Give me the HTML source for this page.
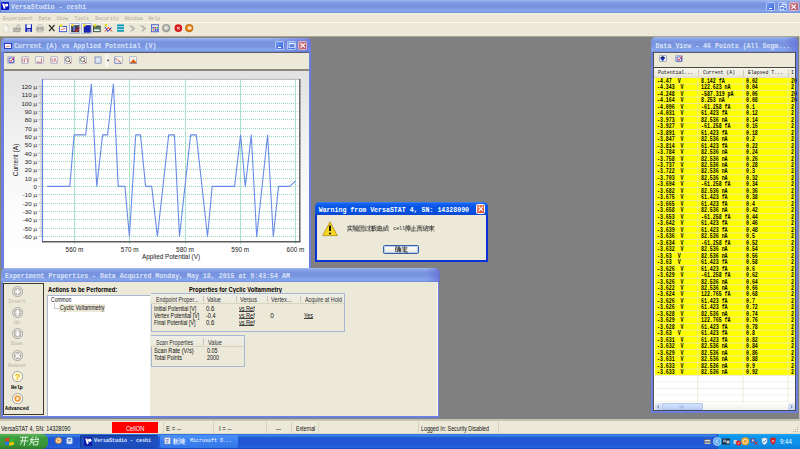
<!DOCTYPE html><html><head><meta charset="utf-8"><style>
html,body{margin:0;padding:0}body{width:800px;height:449px;overflow:hidden;position:relative;background:#808080;font-family:"Liberation Sans",sans-serif}
div{box-sizing:border-box}svg{display:block}
</style></head><body>
<div style="position:absolute;left:0.00px;top:0.00px;width:800.00px;height:12.50px;background:linear-gradient(#a6bdf0 0%,#8ca7e9 10%,#7893df 32%,#7a96e0 62%,#86a6ec 80%,#80a0e8 92%,#7088da 100%)"></div>
<div style="position:absolute;left:0.00px;top:0.00px;width:0.90px;height:12.50px;background:#6c80d8"></div>
<div style="position:absolute;left:1.25px;top:1.90px;width:7.75px;height:8.10px;background:#0812c4;border-radius:1px"></div>
<svg style="position:absolute;left:1.25px;top:1.90px;" width="8" height="8" viewBox="0 0 8 8"><path d="M1.1 1.6 L2.9 7 L4.5 6.3 L3.3 1.6 Z" fill="#fff"/><circle cx="5.6" cy="3.1" r="1.7" fill="#fff"/></svg>
<div style="position:absolute;left:11.00px;top:4.60px;white-space:pre;font:bold 6.6px/6.6px 'Liberation Mono', monospace;color:#dce4f8;">VersaStudio - ceshi</div>
<div style="position:absolute;left:765.75px;top:1.75px;width:9.50px;height:9.50px;background:linear-gradient(135deg,#719af0,#3d69de);border:0.6px solid #b5c8f3;border-radius:1.2px"></div>
<div style="position:absolute;left:768.60px;top:7.64px;width:3.04px;height:1.52px;background:#fff"></div>
<div style="position:absolute;left:777.50px;top:1.75px;width:9.25px;height:9.50px;background:linear-gradient(135deg,#719af0,#3d69de);border:0.6px solid #b5c8f3;border-radius:1.2px"></div>
<svg style="position:absolute;left:777.50px;top:1.75px;" width="9.25" height="9.5" viewBox="0 0 9.25 9.5"><path d="M4 3.6 L4 2.1 L7.6 2.1 L7.6 5.6 L6.2 5.6" fill="none" stroke="#fff" stroke-width="0.65"/><rect x="4" y="1.8" width="3.6" height="0.9" fill="#fff"/><rect x="2.1" y="4.3" width="3.8" height="3.4" fill="none" stroke="#fff" stroke-width="0.65"/><rect x="2.1" y="4.0" width="3.8" height="1.0" fill="#fff"/></svg>
<div style="position:absolute;left:789.00px;top:1.75px;width:9.50px;height:9.50px;background:linear-gradient(135deg,#cf8793,#b0596a);border:0.6px solid #dcb4c0;border-radius:1.2px"></div>
<svg style="position:absolute;left:789.00px;top:1.75px;" width="9.5" height="9.5" viewBox="0 0 9.5 9.5"><path d="M2.57 2.57 L6.93 6.93 M6.93 2.57 L2.57 6.93" stroke="#fff" stroke-width="1.1"/></svg>
<div style="position:absolute;left:0.00px;top:12.50px;width:800.00px;height:9.90px;background:#ece9d8"></div>
<div style="position:absolute;left:0.00px;top:12.50px;width:800.00px;height:0.70px;background:#f4f1e2"></div>
<div style="position:absolute;left:0.00px;top:21.90px;width:800.00px;height:0.70px;background:#faf8f0"></div>
<div style="position:absolute;left:3.00px;top:15.60px;white-space:pre;font:normal 5.6px/5.6px 'Liberation Mono', monospace;color:#aca899;transform:scaleX(0.8839);transform-origin:0 0;">Experiment  Data  View  Tools  Security  Window  Help</div>
<div style="position:absolute;left:0.00px;top:22.60px;width:800.00px;height:13.10px;background:#ece9d8"></div>
<div style="position:absolute;left:0.00px;top:35.50px;width:800.00px;height:1.00px;background:#a9a592"></div>
<svg style="position:absolute;left:2.50px;top:24.40px;" width="6.25" height="8.200000000000003" viewBox="0 0 6.25 8.200000000000003"><path d="M0.4 0.4 L4 0.4 L5.8 2.2 L5.8 7.9 L0.4 7.9Z" fill="#f2f1ea" stroke="#d4d2c6" stroke-width="0.5"/><path d="M4 0.4 L4 2.2 L5.8 2.2" fill="#dcdad0" stroke="#c8c6ba" stroke-width="0.4"/></svg>
<svg style="position:absolute;left:12.80px;top:24.40px;" width="8.2" height="8.200000000000003" viewBox="0 0 8.2 8.200000000000003"><path d="M0.5 3.5 L0.5 7.8 L7 7.8 L7.8 4 L2 4 Z" fill="#a8a7a0"/><path d="M3 3.5 L4.5 0.5 L7 1.2 L6.5 4.5Z" fill="#dcdbd4" stroke="#8c8b84" stroke-width="0.4"/><path d="M0.5 3.5 L2.8 3.5 L2 7.8 L0.5 7.8Z" fill="#c4c3bc"/><path d="M1 4.5 L7.6 4.5 L6.8 7.8 L0.5 7.8Z" fill="#bab9b2" stroke="#8c8b84" stroke-width="0.4"/></svg>
<svg style="position:absolute;left:24.60px;top:24.40px;" width="7.5" height="8.200000000000003" viewBox="0 0 7.5 8.200000000000003"><rect x="0.3" y="0.3" width="6.90" height="7.60" fill="#1420b8"/><rect x="1.6" y="0.3" width="4.30" height="3.6" fill="#f4f6fc"/><rect x="2.4" y="5.2" width="2.90" height="2.70" fill="#e8ecf8"/><rect x="3.4" y="5.8" width="1" height="1.6" fill="#1420b8"/></svg>
<svg style="position:absolute;left:36.00px;top:24.40px;" width="8.200000000000003" height="8.200000000000003" viewBox="0 0 8.200000000000003 8.200000000000003"><path d="M2.2 0.5 L5.8 0.5 L6.2 3.5 L1.8 3.5Z" fill="#e6e5de" stroke="#a4a39c" stroke-width="0.4"/><rect x="0.4" y="3.2" width="7.4" height="3.4" rx="0.6" fill="#b4b3ac" stroke="#8c8b84" stroke-width="0.4"/><rect x="1.6" y="5.8" width="5" height="2.2" fill="#d6d5ce" stroke="#9c9b94" stroke-width="0.4"/></svg>
<svg style="position:absolute;left:47.50px;top:24.40px;" width="7.5" height="8.200000000000003" viewBox="0 0 7.5 8.200000000000003"><path d="M1 1 L6.50 7.20 M6.50 1 L1 7.20" stroke="#303030" stroke-width="1.3"/></svg>
<svg style="position:absolute;left:58.75px;top:24.40px;" width="8.150000000000006" height="8.200000000000003" viewBox="0 0 8.150000000000006 8.200000000000003"><rect x="0.4" y="2.5" width="7.35" height="5.20" fill="#fff" stroke="#3447c8" stroke-width="0.9"/><path d="M2 6 L4 5 L6.5 4.5" stroke="#d03030" stroke-width="0.7" fill="none"/><circle cx="2" cy="1.8" r="1.5" fill="#e8d820"/></svg>
<div style="position:absolute;left:69.00px;top:23.40px;width:11.00px;height:10.40px;background:#f6f6f2;border:0.7px solid #a8b8d8;border-radius:1px"></div>
<svg style="position:absolute;left:70.60px;top:24.40px;" width="9" height="8.200000000000003" viewBox="0 0 9 8.200000000000003"><rect x="0.3" y="1.5" width="7.5" height="6.5" fill="#404050" stroke="#2a2a40" stroke-width="0.5"/><rect x="2" y="2" width="2" height="5" fill="#6070d0"/><path d="M4 6 L5.5 7.5 L8.5 3.5" stroke="#e02020" stroke-width="1.1" fill="none"/><circle cx="1.6" cy="1.2" r="1.2" fill="#e8d820"/></svg>
<div style="position:absolute;left:81.00px;top:23.40px;width:10.50px;height:10.40px;background:#f6f6f2;border:0.7px solid #a8b8d8;border-radius:1px"></div>
<svg style="position:absolute;left:82.50px;top:24.40px;" width="8" height="8.200000000000003" viewBox="0 0 8 8.200000000000003"><rect x="1" y="1.5" width="6.5" height="6.8" fill="#1624b8" stroke="#101060" stroke-width="0.5"/><circle cx="1.4" cy="1.4" r="1.3" fill="#e8d820"/></svg>
<svg style="position:absolute;left:93.00px;top:24.40px;" width="7.599999999999994" height="8.200000000000003" viewBox="0 0 7.599999999999994 8.200000000000003"><rect x="0.4" y="2" width="6.80" height="5.80" fill="#2a8a6a" stroke="#303030" stroke-width="0.7"/><rect x="1" y="5.5" width="5.60" height="1.6" fill="#fff"/><path d="M1 5 L3 3.5 L5 4.5 L7 3" stroke="#e04040" stroke-width="0.7" fill="none"/><circle cx="2" cy="1.4" r="1.3" fill="#e8d820"/></svg>
<svg style="position:absolute;left:104.40px;top:24.40px;" width="8.599999999999994" height="8.200000000000003" viewBox="0 0 8.599999999999994 8.200000000000003"><path d="M1 3 L4 7.5 L7.5 3.5" stroke="#2030d0" stroke-width="1" fill="none"/><path d="M1 7.5 L4.5 3.5 L8 7.5" stroke="#e02020" stroke-width="1" fill="none"/><circle cx="2" cy="1.4" r="1.3" fill="#e8d820"/></svg>
<svg style="position:absolute;left:116.90px;top:24.40px;" width="7.099999999999994" height="8.200000000000003" viewBox="0 0 7.099999999999994 8.200000000000003"><rect x="0" y="0.4" width="7.10" height="7.40" fill="#1a9ab8"/><rect x="0" y="2.4" width="7.10" height="0.8" fill="#d0f0f8"/><rect x="0" y="5" width="7.10" height="0.8" fill="#d0f0f8"/></svg>
<svg style="position:absolute;left:127.50px;top:24.40px;" width="8.099999999999994" height="8.200000000000003" viewBox="0 0 8.099999999999994 8.200000000000003"><path d="M0.5 1.5 L4 1.5 L7.5 4.5 L4 7.5 L2 7.5 L4.5 4.5 Z" fill="#b8b7b0"/></svg>
<svg style="position:absolute;left:138.75px;top:24.40px;" width="8.150000000000006" height="8.200000000000003" viewBox="0 0 8.150000000000006 8.200000000000003"><path d="M0.5 1.5 L4 1.5 L7.5 4.5 L4 7.5 L2 7.5 L4.5 4.5 Z" fill="#b8b7b0"/></svg>
<svg style="position:absolute;left:150.60px;top:24.40px;" width="8.150000000000006" height="8.200000000000003" viewBox="0 0 8.150000000000006 8.200000000000003"><rect x="0.3" y="0.8" width="7.55" height="7.00" fill="#e8ecf8" stroke="#2840c0" stroke-width="0.8"/><rect x="1.5" y="3" width="1.5" height="1.5" fill="#2040c0"/><rect x="3.5" y="3" width="1.5" height="1.5" fill="#d03030"/><rect x="5.5" y="3" width="1.5" height="1.5" fill="#20a040"/><rect x="1.5" y="5.2" width="1.5" height="1.5" fill="#e0a020"/><rect x="3.5" y="5.2" width="1.5" height="1.5" fill="#2040c0"/><rect x="5.5" y="5.2" width="1.5" height="1.5" fill="#2040c0"/></svg>
<svg style="position:absolute;left:162.25px;top:24.40px;" width="8.349999999999994" height="8.200000000000003" viewBox="0 0 8.349999999999994 8.200000000000003"><circle cx="4.17" cy="4.10" r="3.90" fill="#a8a8a4" stroke="#888884" stroke-width="0.5"/><circle cx="4.17" cy="3.80" r="2.50" fill="#c8c8c4"/><path d="M3.4 2.6 L6 4.1 L3.4 5.6Z" fill="#f4f4f4"/></svg>
<svg style="position:absolute;left:173.50px;top:24.40px;" width="8.75" height="8.200000000000003" viewBox="0 0 8.75 8.200000000000003"><circle cx="4.38" cy="4.10" r="3.90" fill="#d81818"/><path d="M3 3 L5.8 5.4 M5.8 3 L3 5.4" stroke="#fff" stroke-width="0.9"/></svg>
<svg style="position:absolute;left:185.20px;top:24.40px;" width="8.400000000000006" height="8.200000000000003" viewBox="0 0 8.400000000000006 8.200000000000003"><circle cx="4.20" cy="4.10" r="3.90" fill="#d87a10" stroke="#b06008" stroke-width="0.5"/><circle cx="4.20" cy="3.70" r="2.30" fill="#f0a040"/><path d="M3.2 2.4 L5.8 4.1 L3.2 5.8Z" fill="#fff"/><rect x="5.6" y="2.6" width="0.8" height="3" fill="#fff"/></svg>
<div style="position:absolute;left:0.00px;top:36.40px;width:1.30px;height:382.90px;background:#8a8874"></div>
<div style="position:absolute;left:798.60px;top:36.40px;width:1.40px;height:382.90px;background:#c8c6bc"></div>
<div style="position:absolute;left:1.00px;top:37.50px;width:310.00px;height:230.50px;background:#6b7fe0;border-radius:5px 5px 0 0"></div>
<div style="position:absolute;left:1.00px;top:37.50px;width:310.00px;height:14.50px;background:linear-gradient(#a6bdf0 0%,#8ca7e9 10%,#7893df 32%,#7a96e0 62%,#86a6ec 80%,#80a0e8 92%,#7088da 100%);border-radius:5px 5px 0 0"></div>
<div style="position:absolute;left:4.00px;top:43.30px;width:8.20px;height:5.70px;background:#fff;border:0.9px solid #2c3fd0"></div>
<svg style="position:absolute;left:4.00px;top:43.30px;" width="8.2" height="5.7" viewBox="0 0 8.2 5.7"><path d="M1.5 4 L3.5 3.2 L5 3.5 L6.8 1.8" stroke="#d04040" stroke-width="0.7" fill="none"/></svg>
<div style="position:absolute;left:14.00px;top:43.60px;white-space:pre;font:bold 6.6px/6.6px 'Liberation Mono', monospace;color:#dce4f8;">Current (A) vs Applied Potential (V)</div>
<div style="position:absolute;left:271.00px;top:37.50px;width:40.00px;height:14.50px;background:linear-gradient(90deg,rgba(96,104,214,0) 0%,rgba(96,104,214,0.45) 80%,rgba(96,104,214,0.6) 100%);border-radius:0 5px 0 0"></div>
<div style="position:absolute;left:275.00px;top:41.00px;width:9.06px;height:9.00px;background:linear-gradient(135deg,#719af0,#3d69de);border:0.6px solid #b5c8f3;border-radius:1.2px"></div>
<div style="position:absolute;left:277.72px;top:46.58px;width:2.90px;height:1.44px;background:#fff"></div>
<div style="position:absolute;left:286.60px;top:41.00px;width:9.30px;height:9.00px;background:linear-gradient(135deg,#719af0,#3d69de);border:0.6px solid #b5c8f3;border-radius:1.2px"></div>
<svg style="position:absolute;left:286.60px;top:41.00px;" width="9.299999999999955" height="9" viewBox="0 0 9.299999999999955 9"><rect x="2.05" y="2.16" width="5.21" height="4.50" fill="none" stroke="#f4f6ff" stroke-width="0.7"/><rect x="2.05" y="1.98" width="5.21" height="1.2" fill="#f4f6ff"/></svg>
<div style="position:absolute;left:297.90px;top:41.00px;width:9.60px;height:9.00px;background:linear-gradient(135deg,#cf8793,#b0596a);border:0.6px solid #dcb4c0;border-radius:1.2px"></div>
<svg style="position:absolute;left:297.90px;top:41.00px;" width="9.600000000000023" height="9" viewBox="0 0 9.600000000000023 9"><path d="M2.59 2.43 L7.01 6.57 M7.01 2.43 L2.59 6.57" stroke="#fff" stroke-width="1.1"/></svg>
<div style="position:absolute;left:4.00px;top:52.00px;width:304.75px;height:216.00px;background:#ece9d8"></div>
<div style="position:absolute;left:4.00px;top:69.30px;width:304.75px;height:1.30px;background:#8a8878"></div>
<div style="position:absolute;left:4.00px;top:52.00px;width:304.75px;height:0.80px;background:#5a5a6a"></div>
<div style="position:absolute;left:4.00px;top:70.60px;width:304.75px;height:197.40px;background:linear-gradient(#e2e2e2 0%,#f0f0f0 30%,#fcfcfc 70%,#ffffff 100%)"></div>
<div style="position:absolute;left:6.65px;top:56.10px;width:8.25px;height:8.30px;background:#f2f1ea;border:0.6px solid #b8bccc;border-radius:1px"></div>
<svg style="position:absolute;left:6.65px;top:56.10px;" width="8.25" height="8.3" viewBox="0 0 8.25 8.3"><rect x="2" y="2" width="4.5" height="4.5" fill="#fff" stroke="#3040c0" stroke-width="0.8"/><path d="M2.8 4 L4 5.6 L6.8 1.5" stroke="#e02020" stroke-width="0.9" fill="none"/></svg>
<div style="position:absolute;left:21.00px;top:56.10px;width:7.90px;height:8.30px;background:#f2f1ea;border:0.6px solid #b8bccc;border-radius:1px"></div>
<svg style="position:absolute;left:21.00px;top:56.10px;" width="7.899999999999999" height="8.3" viewBox="0 0 7.899999999999999 8.3"><path d="M1.8 6.5 L1.8 2.2 M3.5 6.5 L3.5 3 L5 2 L6.5 3 L6.5 6.5" stroke="#c04060" stroke-width="0.6" fill="none"/></svg>
<div style="position:absolute;left:35.00px;top:56.10px;width:8.80px;height:8.30px;background:#f2f1ea;border:0.6px solid #b8bccc;border-radius:1px"></div>
<svg style="position:absolute;left:35.00px;top:56.10px;" width="8.799999999999997" height="8.3" viewBox="0 0 8.799999999999997 8.3"><path d="M1.8 6.5 L6.8 6.5 M6.5 2 L6.5 6.5 M3 5 L3 6.5" stroke="#c04060" stroke-width="0.6" fill="none"/></svg>
<div style="position:absolute;left:49.90px;top:56.10px;width:8.20px;height:8.30px;background:#f2f1ea;border:0.6px solid #b8bccc;border-radius:1px"></div>
<svg style="position:absolute;left:49.90px;top:56.10px;" width="8.200000000000003" height="8.3" viewBox="0 0 8.200000000000003 8.3"><path d="M2 6.5 L2 2 M3.6 6.5 L4.8 2.2 L6.5 6.5" stroke="#c04060" stroke-width="0.6" fill="none"/></svg>
<div style="position:absolute;left:63.90px;top:56.10px;width:7.90px;height:8.30px;background:#f2f1ea;border:0.6px solid #b8bccc;border-radius:1px"></div>
<svg style="position:absolute;left:63.90px;top:56.10px;" width="7.899999999999999" height="8.3" viewBox="0 0 7.899999999999999 8.3"><circle cx="3.6" cy="3.6" r="2.1" fill="none" stroke="#404040" stroke-width="0.7"/><path d="M5 5 L7 7" stroke="#d05020" stroke-width="1"/></svg>
<div style="position:absolute;left:78.80px;top:56.10px;width:7.90px;height:8.30px;background:#f2f1ea;border:0.6px solid #b8bccc;border-radius:1px"></div>
<svg style="position:absolute;left:78.80px;top:56.10px;" width="7.900000000000006" height="8.3" viewBox="0 0 7.900000000000006 8.3"><circle cx="3.6" cy="3.6" r="2.1" fill="none" stroke="#404040" stroke-width="0.7"/><path d="M5 5 L7 7" stroke="#d05020" stroke-width="1"/></svg>
<div style="position:absolute;left:93.70px;top:56.10px;width:7.90px;height:8.30px;background:#f2f1ea;border:0.6px solid #b8bccc;border-radius:1px"></div>
<svg style="position:absolute;left:93.70px;top:56.10px;" width="7.8999999999999915" height="8.3" viewBox="0 0 7.8999999999999915 8.3"><rect x="1.5" y="1.5" width="5" height="5.5" fill="#dde4f4" stroke="#8090b8" stroke-width="0.5"/></svg>
<div style="position:absolute;left:105.00px;top:54.00px;width:6.20px;height:13.00px;background:linear-gradient(90deg,#f8f8f4,#e8e6dc);border-radius:1px"></div>
<svg style="position:absolute;left:105.00px;top:54.00px;" width="6.2" height="13" viewBox="0 0 6.2 13"><path d="M1.8 5.8 L4.4 5.8 L3.1 7.4Z" fill="#202020"/></svg>
<div style="position:absolute;left:113.80px;top:56.10px;width:8.80px;height:8.30px;background:#f2f1ea;border:0.6px solid #b8bccc;border-radius:1px"></div>
<svg style="position:absolute;left:113.80px;top:56.10px;" width="8.799999999999997" height="8.3" viewBox="0 0 8.799999999999997 8.3"><path d="M1.5 2 L4 4.5 L7 6.5" stroke="#d03030" stroke-width="0.8" fill="none"/><path d="M1 1 L1 7.3 L7.5 7.3" stroke="#4060c0" stroke-width="0.5" fill="none"/></svg>
<div style="position:absolute;left:128.70px;top:56.10px;width:8.80px;height:8.30px;background:#f2f1ea;border:0.6px solid #b8bccc;border-radius:1px"></div>
<svg style="position:absolute;left:128.70px;top:56.10px;" width="8.800000000000011" height="8.3" viewBox="0 0 8.800000000000011 8.3"><path d="M1 7 L4.4 3 L7.8 7Z" fill="#e06010"/><path d="M0.8 7.3 L8 7.3" stroke="#606060" stroke-width="0.5"/></svg>
<div style="position:absolute;left:42.00px;top:79.00px;width:258.00px;height:163.00px;background:#fff"></div>
<div style="position:absolute;left:43.00px;top:236.00px;width:256.00px;height:1.00px;background:repeating-linear-gradient(90deg,#92d8bc 0 1px,transparent 1px 2px)"></div>
<div style="position:absolute;left:43.00px;top:228.00px;width:256.00px;height:1.00px;background:repeating-linear-gradient(90deg,#92d8bc 0 1px,transparent 1px 2px)"></div>
<div style="position:absolute;left:43.00px;top:219.00px;width:256.00px;height:1.00px;background:repeating-linear-gradient(90deg,#92d8bc 0 1px,transparent 1px 2px)"></div>
<div style="position:absolute;left:43.00px;top:211.00px;width:256.00px;height:1.00px;background:repeating-linear-gradient(90deg,#92d8bc 0 1px,transparent 1px 2px)"></div>
<div style="position:absolute;left:43.00px;top:203.00px;width:256.00px;height:1.00px;background:repeating-linear-gradient(90deg,#92d8bc 0 1px,transparent 1px 2px)"></div>
<div style="position:absolute;left:43.00px;top:194.00px;width:256.00px;height:1.00px;background:repeating-linear-gradient(90deg,#92d8bc 0 1px,transparent 1px 2px)"></div>
<div style="position:absolute;left:43.00px;top:186.00px;width:256.00px;height:1.00px;background:repeating-linear-gradient(90deg,#92d8bc 0 1px,transparent 1px 2px)"></div>
<div style="position:absolute;left:43.00px;top:178.00px;width:256.00px;height:1.00px;background:repeating-linear-gradient(90deg,#92d8bc 0 1px,transparent 1px 2px)"></div>
<div style="position:absolute;left:43.00px;top:169.00px;width:256.00px;height:1.00px;background:repeating-linear-gradient(90deg,#92d8bc 0 1px,transparent 1px 2px)"></div>
<div style="position:absolute;left:43.00px;top:161.00px;width:256.00px;height:1.00px;background:repeating-linear-gradient(90deg,#92d8bc 0 1px,transparent 1px 2px)"></div>
<div style="position:absolute;left:43.00px;top:153.00px;width:256.00px;height:1.00px;background:repeating-linear-gradient(90deg,#92d8bc 0 1px,transparent 1px 2px)"></div>
<div style="position:absolute;left:43.00px;top:144.00px;width:256.00px;height:1.00px;background:repeating-linear-gradient(90deg,#92d8bc 0 1px,transparent 1px 2px)"></div>
<div style="position:absolute;left:43.00px;top:136.00px;width:256.00px;height:1.00px;background:repeating-linear-gradient(90deg,#92d8bc 0 1px,transparent 1px 2px)"></div>
<div style="position:absolute;left:43.00px;top:128.00px;width:256.00px;height:1.00px;background:repeating-linear-gradient(90deg,#92d8bc 0 1px,transparent 1px 2px)"></div>
<div style="position:absolute;left:43.00px;top:119.00px;width:256.00px;height:1.00px;background:repeating-linear-gradient(90deg,#92d8bc 0 1px,transparent 1px 2px)"></div>
<div style="position:absolute;left:43.00px;top:111.00px;width:256.00px;height:1.00px;background:repeating-linear-gradient(90deg,#92d8bc 0 1px,transparent 1px 2px)"></div>
<div style="position:absolute;left:43.00px;top:103.00px;width:256.00px;height:1.00px;background:repeating-linear-gradient(90deg,#92d8bc 0 1px,transparent 1px 2px)"></div>
<div style="position:absolute;left:43.00px;top:94.00px;width:256.00px;height:1.00px;background:repeating-linear-gradient(90deg,#92d8bc 0 1px,transparent 1px 2px)"></div>
<div style="position:absolute;left:43.00px;top:86.00px;width:256.00px;height:1.00px;background:repeating-linear-gradient(90deg,#92d8bc 0 1px,transparent 1px 2px)"></div>
<div style="position:absolute;left:74.00px;top:79.00px;width:1.00px;height:164.50px;background:#a8e2ca"></div>
<div style="position:absolute;left:129.00px;top:79.00px;width:1.00px;height:164.50px;background:#a8e2ca"></div>
<div style="position:absolute;left:185.00px;top:79.00px;width:1.00px;height:164.50px;background:#a8e2ca"></div>
<div style="position:absolute;left:240.00px;top:79.00px;width:1.00px;height:164.50px;background:#a8e2ca"></div>
<div style="position:absolute;left:295.00px;top:79.00px;width:1.00px;height:164.50px;background:#a8e2ca"></div>
<svg style="position:absolute;left:0.00px;top:0.00px;" width="800" height="449" viewBox="0 0 800 449"><path d="M47.0 186.4 L69.8 186.4 L74.1 134.9 L85.7 134.9 L91.4 84.0 L96.8 186.4 L102.6 134.9 L107.6 134.9 L113.4 84.0 L118.2 186.4 L124.9 186.4 L129.4 236.5 L135.7 134.9 L140.5 134.9 L145.6 186.4 L151.7 186.4 L157.4 236.5 L168.7 134.9 L174.4 134.9 L179.5 236.5 L190.6 134.9 L196.3 134.9 L207.5 236.5 L212.2 186.4 L234.6 186.4 L240.6 135.0 L245.3 186.4 L251.3 135.0 L256.7 236.8 L267.6 135.0 L273.3 236.8 L278.5 186.4 L289.7 186.4 L295.6 180.8" stroke="#6a8ae8" stroke-width="1.1" fill="none" stroke-linejoin="round"/><line x1="42" y1="79.3" x2="300" y2="79.3" stroke="#a8a8a8" stroke-width="0.9"/><line x1="42.4" y1="79" x2="42.4" y2="242" stroke="#4c74e0" stroke-width="1"/><line x1="42" y1="241.8" x2="300.5" y2="241.8" stroke="#5c5c5c" stroke-width="1.4"/><line x1="299.8" y1="79" x2="299.8" y2="242" stroke="#5c5c5c" stroke-width="1.4"/></svg>
<svg style="position:absolute;left:0.00px;top:0.00px;" width="800" height="449" viewBox="0 0 800 449"><line x1="38.3" y1="236.40" x2="42" y2="236.40" stroke="#909090" stroke-width="0.6"/><line x1="40" y1="234.73" x2="42" y2="234.73" stroke="#b0b0b0" stroke-width="0.5"/><line x1="40" y1="233.06" x2="42" y2="233.06" stroke="#b0b0b0" stroke-width="0.5"/><line x1="40" y1="231.40" x2="42" y2="231.40" stroke="#b0b0b0" stroke-width="0.5"/><line x1="40" y1="229.73" x2="42" y2="229.73" stroke="#b0b0b0" stroke-width="0.5"/><line x1="38.3" y1="228.06" x2="42" y2="228.06" stroke="#909090" stroke-width="0.6"/><line x1="40" y1="226.40" x2="42" y2="226.40" stroke="#b0b0b0" stroke-width="0.5"/><line x1="40" y1="224.73" x2="42" y2="224.73" stroke="#b0b0b0" stroke-width="0.5"/><line x1="40" y1="223.07" x2="42" y2="223.07" stroke="#b0b0b0" stroke-width="0.5"/><line x1="40" y1="221.40" x2="42" y2="221.40" stroke="#b0b0b0" stroke-width="0.5"/><line x1="38.3" y1="219.73" x2="42" y2="219.73" stroke="#909090" stroke-width="0.6"/><line x1="40" y1="218.07" x2="42" y2="218.07" stroke="#b0b0b0" stroke-width="0.5"/><line x1="40" y1="216.40" x2="42" y2="216.40" stroke="#b0b0b0" stroke-width="0.5"/><line x1="40" y1="214.73" x2="42" y2="214.73" stroke="#b0b0b0" stroke-width="0.5"/><line x1="40" y1="213.07" x2="42" y2="213.07" stroke="#b0b0b0" stroke-width="0.5"/><line x1="38.3" y1="211.40" x2="42" y2="211.40" stroke="#909090" stroke-width="0.6"/><line x1="40" y1="209.73" x2="42" y2="209.73" stroke="#b0b0b0" stroke-width="0.5"/><line x1="40" y1="208.07" x2="42" y2="208.07" stroke="#b0b0b0" stroke-width="0.5"/><line x1="40" y1="206.40" x2="42" y2="206.40" stroke="#b0b0b0" stroke-width="0.5"/><line x1="40" y1="204.73" x2="42" y2="204.73" stroke="#b0b0b0" stroke-width="0.5"/><line x1="38.3" y1="203.07" x2="42" y2="203.07" stroke="#909090" stroke-width="0.6"/><line x1="40" y1="201.40" x2="42" y2="201.40" stroke="#b0b0b0" stroke-width="0.5"/><line x1="40" y1="199.73" x2="42" y2="199.73" stroke="#b0b0b0" stroke-width="0.5"/><line x1="40" y1="198.07" x2="42" y2="198.07" stroke="#b0b0b0" stroke-width="0.5"/><line x1="40" y1="196.40" x2="42" y2="196.40" stroke="#b0b0b0" stroke-width="0.5"/><line x1="38.3" y1="194.73" x2="42" y2="194.73" stroke="#909090" stroke-width="0.6"/><line x1="40" y1="193.07" x2="42" y2="193.07" stroke="#b0b0b0" stroke-width="0.5"/><line x1="40" y1="191.40" x2="42" y2="191.40" stroke="#b0b0b0" stroke-width="0.5"/><line x1="40" y1="189.73" x2="42" y2="189.73" stroke="#b0b0b0" stroke-width="0.5"/><line x1="40" y1="188.07" x2="42" y2="188.07" stroke="#b0b0b0" stroke-width="0.5"/><line x1="38.3" y1="186.40" x2="42" y2="186.40" stroke="#909090" stroke-width="0.6"/><line x1="40" y1="184.73" x2="42" y2="184.73" stroke="#b0b0b0" stroke-width="0.5"/><line x1="40" y1="183.07" x2="42" y2="183.07" stroke="#b0b0b0" stroke-width="0.5"/><line x1="40" y1="181.40" x2="42" y2="181.40" stroke="#b0b0b0" stroke-width="0.5"/><line x1="40" y1="179.73" x2="42" y2="179.73" stroke="#b0b0b0" stroke-width="0.5"/><line x1="38.3" y1="178.07" x2="42" y2="178.07" stroke="#909090" stroke-width="0.6"/><line x1="40" y1="176.40" x2="42" y2="176.40" stroke="#b0b0b0" stroke-width="0.5"/><line x1="40" y1="174.73" x2="42" y2="174.73" stroke="#b0b0b0" stroke-width="0.5"/><line x1="40" y1="173.07" x2="42" y2="173.07" stroke="#b0b0b0" stroke-width="0.5"/><line x1="40" y1="171.40" x2="42" y2="171.40" stroke="#b0b0b0" stroke-width="0.5"/><line x1="38.3" y1="169.73" x2="42" y2="169.73" stroke="#909090" stroke-width="0.6"/><line x1="40" y1="168.07" x2="42" y2="168.07" stroke="#b0b0b0" stroke-width="0.5"/><line x1="40" y1="166.40" x2="42" y2="166.40" stroke="#b0b0b0" stroke-width="0.5"/><line x1="40" y1="164.73" x2="42" y2="164.73" stroke="#b0b0b0" stroke-width="0.5"/><line x1="40" y1="163.07" x2="42" y2="163.07" stroke="#b0b0b0" stroke-width="0.5"/><line x1="38.3" y1="161.40" x2="42" y2="161.40" stroke="#909090" stroke-width="0.6"/><line x1="40" y1="159.73" x2="42" y2="159.73" stroke="#b0b0b0" stroke-width="0.5"/><line x1="40" y1="158.07" x2="42" y2="158.07" stroke="#b0b0b0" stroke-width="0.5"/><line x1="40" y1="156.40" x2="42" y2="156.40" stroke="#b0b0b0" stroke-width="0.5"/><line x1="40" y1="154.73" x2="42" y2="154.73" stroke="#b0b0b0" stroke-width="0.5"/><line x1="38.3" y1="153.07" x2="42" y2="153.07" stroke="#909090" stroke-width="0.6"/><line x1="40" y1="151.40" x2="42" y2="151.40" stroke="#b0b0b0" stroke-width="0.5"/><line x1="40" y1="149.73" x2="42" y2="149.73" stroke="#b0b0b0" stroke-width="0.5"/><line x1="40" y1="148.07" x2="42" y2="148.07" stroke="#b0b0b0" stroke-width="0.5"/><line x1="40" y1="146.40" x2="42" y2="146.40" stroke="#b0b0b0" stroke-width="0.5"/><line x1="38.3" y1="144.74" x2="42" y2="144.74" stroke="#909090" stroke-width="0.6"/><line x1="40" y1="143.07" x2="42" y2="143.07" stroke="#b0b0b0" stroke-width="0.5"/><line x1="40" y1="141.40" x2="42" y2="141.40" stroke="#b0b0b0" stroke-width="0.5"/><line x1="40" y1="139.74" x2="42" y2="139.74" stroke="#b0b0b0" stroke-width="0.5"/><line x1="40" y1="138.07" x2="42" y2="138.07" stroke="#b0b0b0" stroke-width="0.5"/><line x1="38.3" y1="136.40" x2="42" y2="136.40" stroke="#909090" stroke-width="0.6"/><line x1="40" y1="134.74" x2="42" y2="134.74" stroke="#b0b0b0" stroke-width="0.5"/><line x1="40" y1="133.07" x2="42" y2="133.07" stroke="#b0b0b0" stroke-width="0.5"/><line x1="40" y1="131.40" x2="42" y2="131.40" stroke="#b0b0b0" stroke-width="0.5"/><line x1="40" y1="129.74" x2="42" y2="129.74" stroke="#b0b0b0" stroke-width="0.5"/><line x1="38.3" y1="128.07" x2="42" y2="128.07" stroke="#909090" stroke-width="0.6"/><line x1="40" y1="126.40" x2="42" y2="126.40" stroke="#b0b0b0" stroke-width="0.5"/><line x1="40" y1="124.74" x2="42" y2="124.74" stroke="#b0b0b0" stroke-width="0.5"/><line x1="40" y1="123.07" x2="42" y2="123.07" stroke="#b0b0b0" stroke-width="0.5"/><line x1="40" y1="121.40" x2="42" y2="121.40" stroke="#b0b0b0" stroke-width="0.5"/><line x1="38.3" y1="119.74" x2="42" y2="119.74" stroke="#909090" stroke-width="0.6"/><line x1="40" y1="118.07" x2="42" y2="118.07" stroke="#b0b0b0" stroke-width="0.5"/><line x1="40" y1="116.40" x2="42" y2="116.40" stroke="#b0b0b0" stroke-width="0.5"/><line x1="40" y1="114.74" x2="42" y2="114.74" stroke="#b0b0b0" stroke-width="0.5"/><line x1="40" y1="113.07" x2="42" y2="113.07" stroke="#b0b0b0" stroke-width="0.5"/><line x1="38.3" y1="111.40" x2="42" y2="111.40" stroke="#909090" stroke-width="0.6"/><line x1="40" y1="109.74" x2="42" y2="109.74" stroke="#b0b0b0" stroke-width="0.5"/><line x1="40" y1="108.07" x2="42" y2="108.07" stroke="#b0b0b0" stroke-width="0.5"/><line x1="40" y1="106.40" x2="42" y2="106.40" stroke="#b0b0b0" stroke-width="0.5"/><line x1="40" y1="104.74" x2="42" y2="104.74" stroke="#b0b0b0" stroke-width="0.5"/><line x1="38.3" y1="103.07" x2="42" y2="103.07" stroke="#909090" stroke-width="0.6"/><line x1="40" y1="101.40" x2="42" y2="101.40" stroke="#b0b0b0" stroke-width="0.5"/><line x1="40" y1="99.74" x2="42" y2="99.74" stroke="#b0b0b0" stroke-width="0.5"/><line x1="40" y1="98.07" x2="42" y2="98.07" stroke="#b0b0b0" stroke-width="0.5"/><line x1="40" y1="96.40" x2="42" y2="96.40" stroke="#b0b0b0" stroke-width="0.5"/><line x1="38.3" y1="94.74" x2="42" y2="94.74" stroke="#909090" stroke-width="0.6"/><line x1="40" y1="93.07" x2="42" y2="93.07" stroke="#b0b0b0" stroke-width="0.5"/><line x1="40" y1="91.40" x2="42" y2="91.40" stroke="#b0b0b0" stroke-width="0.5"/><line x1="40" y1="89.74" x2="42" y2="89.74" stroke="#b0b0b0" stroke-width="0.5"/><line x1="40" y1="88.07" x2="42" y2="88.07" stroke="#b0b0b0" stroke-width="0.5"/><line x1="38.3" y1="86.40" x2="42" y2="86.40" stroke="#909090" stroke-width="0.6"/></svg>
<div style="position:absolute;left:0px;width:37px;text-align:right;top:233.90px;white-space:pre;font:normal 6.2px/6.2px 'Liberation Sans', sans-serif;color:#1a1a1a">-60 µ</div>
<div style="position:absolute;left:0px;width:37px;text-align:right;top:225.56px;white-space:pre;font:normal 6.2px/6.2px 'Liberation Sans', sans-serif;color:#1a1a1a">-50 µ</div>
<div style="position:absolute;left:0px;width:37px;text-align:right;top:217.23px;white-space:pre;font:normal 6.2px/6.2px 'Liberation Sans', sans-serif;color:#1a1a1a">-40 µ</div>
<div style="position:absolute;left:0px;width:37px;text-align:right;top:208.90px;white-space:pre;font:normal 6.2px/6.2px 'Liberation Sans', sans-serif;color:#1a1a1a">-30 µ</div>
<div style="position:absolute;left:0px;width:37px;text-align:right;top:200.57px;white-space:pre;font:normal 6.2px/6.2px 'Liberation Sans', sans-serif;color:#1a1a1a">-20 µ</div>
<div style="position:absolute;left:0px;width:37px;text-align:right;top:192.23px;white-space:pre;font:normal 6.2px/6.2px 'Liberation Sans', sans-serif;color:#1a1a1a">-10 µ</div>
<div style="position:absolute;left:0px;width:37px;text-align:right;top:183.90px;white-space:pre;font:normal 6.2px/6.2px 'Liberation Sans', sans-serif;color:#1a1a1a">0</div>
<div style="position:absolute;left:0px;width:37px;text-align:right;top:175.57px;white-space:pre;font:normal 6.2px/6.2px 'Liberation Sans', sans-serif;color:#1a1a1a">10 µ</div>
<div style="position:absolute;left:0px;width:37px;text-align:right;top:167.23px;white-space:pre;font:normal 6.2px/6.2px 'Liberation Sans', sans-serif;color:#1a1a1a">20 µ</div>
<div style="position:absolute;left:0px;width:37px;text-align:right;top:158.90px;white-space:pre;font:normal 6.2px/6.2px 'Liberation Sans', sans-serif;color:#1a1a1a">30 µ</div>
<div style="position:absolute;left:0px;width:37px;text-align:right;top:150.57px;white-space:pre;font:normal 6.2px/6.2px 'Liberation Sans', sans-serif;color:#1a1a1a">40 µ</div>
<div style="position:absolute;left:0px;width:37px;text-align:right;top:142.24px;white-space:pre;font:normal 6.2px/6.2px 'Liberation Sans', sans-serif;color:#1a1a1a">50 µ</div>
<div style="position:absolute;left:0px;width:37px;text-align:right;top:133.90px;white-space:pre;font:normal 6.2px/6.2px 'Liberation Sans', sans-serif;color:#1a1a1a">60 µ</div>
<div style="position:absolute;left:0px;width:37px;text-align:right;top:125.57px;white-space:pre;font:normal 6.2px/6.2px 'Liberation Sans', sans-serif;color:#1a1a1a">70 µ</div>
<div style="position:absolute;left:0px;width:37px;text-align:right;top:117.24px;white-space:pre;font:normal 6.2px/6.2px 'Liberation Sans', sans-serif;color:#1a1a1a">80 µ</div>
<div style="position:absolute;left:0px;width:37px;text-align:right;top:108.90px;white-space:pre;font:normal 6.2px/6.2px 'Liberation Sans', sans-serif;color:#1a1a1a">90 µ</div>
<div style="position:absolute;left:0px;width:37px;text-align:right;top:100.57px;white-space:pre;font:normal 6.2px/6.2px 'Liberation Sans', sans-serif;color:#1a1a1a">100 µ</div>
<div style="position:absolute;left:0px;width:37px;text-align:right;top:92.24px;white-space:pre;font:normal 6.2px/6.2px 'Liberation Sans', sans-serif;color:#1a1a1a">110 µ</div>
<div style="position:absolute;left:0px;width:37px;text-align:right;top:83.90px;white-space:pre;font:normal 6.2px/6.2px 'Liberation Sans', sans-serif;color:#1a1a1a">120 µ</div>
<div style="position:absolute;left:54.50px;width:40px;text-align:center;top:247px;white-space:pre;font:normal 6.4px/6.4px 'Liberation Sans', sans-serif;color:#1a1a1a">560 m</div>
<div style="position:absolute;left:109.75px;width:40px;text-align:center;top:247px;white-space:pre;font:normal 6.4px/6.4px 'Liberation Sans', sans-serif;color:#1a1a1a">570 m</div>
<div style="position:absolute;left:165.00px;width:40px;text-align:center;top:247px;white-space:pre;font:normal 6.4px/6.4px 'Liberation Sans', sans-serif;color:#1a1a1a">580 m</div>
<div style="position:absolute;left:220.25px;width:40px;text-align:center;top:247px;white-space:pre;font:normal 6.4px/6.4px 'Liberation Sans', sans-serif;color:#1a1a1a">590 m</div>
<div style="position:absolute;left:275.50px;width:40px;text-align:center;top:247px;white-space:pre;font:normal 6.4px/6.4px 'Liberation Sans', sans-serif;color:#1a1a1a">600 m</div>
<div style="position:absolute;left:141.90px;top:254.00px;white-space:pre;font:normal 6.9px/6.9px 'Liberation Sans', sans-serif;color:#202020;transform:scaleX(0.9247);transform-origin:0 0;">Applied Potential (V)</div>
<div style="position:absolute;left:15.5px;top:159.5px;transform:translate(-50%,-50%) rotate(-90deg);white-space:pre;font:normal 6.6px/6.6px 'Liberation Sans', sans-serif;color:#202020">Current (A)</div>
<div style="position:absolute;left:1.30px;top:267.80px;width:438.20px;height:150.20px;background:#6b7fe0;border-radius:5px 5px 0 0"></div>
<div style="position:absolute;left:1.30px;top:267.80px;width:438.20px;height:14.20px;background:linear-gradient(#a6bdf0 0%,#8ca7e9 10%,#7893df 32%,#7a96e0 62%,#86a6ec 80%,#80a0e8 92%,#7088da 100%);border-radius:5px 5px 0 0"></div>
<div style="position:absolute;left:425.50px;top:267.80px;width:14.00px;height:14.20px;background:linear-gradient(90deg,rgba(96,104,214,0) 0%,rgba(96,104,214,0.55) 80%,rgba(96,104,214,0.7) 100%);border-radius:0 5px 0 0"></div>
<div style="position:absolute;left:5.00px;top:273.70px;white-space:pre;font:bold 6.6px/6.6px 'Liberation Mono', monospace;color:#dce4f8;">Experiment Properties - Data Acquired Monday, May 18, 2015 at 9:43:54 AM</div>
<div style="position:absolute;left:3.00px;top:282.00px;width:434.60px;height:134.30px;background:#ece9d8"></div>
<div style="position:absolute;left:437.40px;top:282.00px;width:0.90px;height:134.30px;background:#fdfcf5"></div>
<div style="position:absolute;left:3.10px;top:283.10px;width:40.60px;height:132.10px;border:0.9px solid #3a3a30;border-right-color:#3a3a30;border-bottom-color:#3a3a30"></div>
<svg style="position:absolute;left:11.60px;top:286.10px;" width="11.2" height="11.2" viewBox="0 0 11.2 11.2"><circle cx="5.6" cy="5.6" r="5.1" fill="#f0efea" stroke="#a4a39c" stroke-width="0.9"/><circle cx="5.6" cy="5.6" r="3.9" fill="#b9b8b1"/><path d="M5.6 3 L5.6 8.2 M3 5.6 L8.2 5.6" stroke="#fff" stroke-width="1.6"/></svg>
<div style="position:absolute;left:8.35px;top:299.30px;white-space:pre;font:normal 5.6px/5.6px 'Liberation Mono', monospace;color:#b8b5a4;transform:scaleX(0.8780);transform-origin:0 0;">Insert</div>
<svg style="position:absolute;left:11.60px;top:307.20px;" width="11.2" height="11.2" viewBox="0 0 11.2 11.2"><circle cx="5.6" cy="5.6" r="5.1" fill="#f0efea" stroke="#a4a39c" stroke-width="0.9"/><circle cx="5.6" cy="5.6" r="3.9" fill="#b9b8b1"/><path d="M5.6 2.6 L8.4 5.8 L6.7 5.8 L6.7 8.6 L4.5 8.6 L4.5 5.8 L2.8 5.8Z" fill="#fff"/></svg>
<div style="position:absolute;left:14.25px;top:320.40px;white-space:pre;font:normal 5.6px/5.6px 'Liberation Mono', monospace;color:#b8b5a4;transform:scaleX(0.8780);transform-origin:0 0;">Up</div>
<svg style="position:absolute;left:11.60px;top:328.20px;" width="11.2" height="11.2" viewBox="0 0 11.2 11.2"><circle cx="5.6" cy="5.6" r="5.1" fill="#f0efea" stroke="#a4a39c" stroke-width="0.9"/><circle cx="5.6" cy="5.6" r="3.9" fill="#b9b8b1"/><path d="M5.6 8.6 L8.4 5.4 L6.7 5.4 L6.7 2.6 L4.5 2.6 L4.5 5.4 L2.8 5.4Z" fill="#fff"/></svg>
<div style="position:absolute;left:11.30px;top:341.40px;white-space:pre;font:normal 5.6px/5.6px 'Liberation Mono', monospace;color:#b8b5a4;transform:scaleX(0.8780);transform-origin:0 0;">Down</div>
<svg style="position:absolute;left:11.60px;top:349.80px;" width="11.2" height="11.2" viewBox="0 0 11.2 11.2"><circle cx="5.6" cy="5.6" r="5.1" fill="#f0efea" stroke="#a4a39c" stroke-width="0.9"/><circle cx="5.6" cy="5.6" r="3.9" fill="#b9b8b1"/><path d="M3.4 3.4 L7.8 7.8 M7.8 3.4 L3.4 7.8" stroke="#fff" stroke-width="1.4"/></svg>
<div style="position:absolute;left:8.35px;top:363.00px;white-space:pre;font:normal 5.6px/5.6px 'Liberation Mono', monospace;color:#b8b5a4;transform:scaleX(0.8780);transform-origin:0 0;">Remove</div>
<svg style="position:absolute;left:11.60px;top:371.40px;" width="11.2" height="11.2" viewBox="0 0 11.2 11.2"><circle cx="5.6" cy="5.6" r="5.1" fill="#fff" stroke="#8a8a84" stroke-width="0.8"/><circle cx="5.6" cy="5.6" r="4" fill="#fff8d0"/><text x="5.6" y="8.8" font-family="Liberation Sans" font-weight="bold" font-size="8.5" text-anchor="middle" fill="#f0b800">?</text></svg>
<div style="position:absolute;left:11.30px;top:384.60px;white-space:pre;font:bold 5.6px/5.6px 'Liberation Mono', monospace;color:#000;transform:scaleX(0.8780);transform-origin:0 0;">Help</div>
<svg style="position:absolute;left:11.60px;top:392.80px;" width="11.2" height="11.2" viewBox="0 0 11.2 11.2"><circle cx="5.6" cy="5.6" r="5.1" fill="#fff" stroke="#8a8a84" stroke-width="0.8"/><circle cx="5.6" cy="5.6" r="3.3" fill="#f0a040"/><circle cx="5.6" cy="5.6" r="1.5" fill="#fff0d8"/></svg>
<div style="position:absolute;left:5.40px;top:406.00px;white-space:pre;font:bold 5.6px/5.6px 'Liberation Mono', monospace;color:#000;transform:scaleX(0.8780);transform-origin:0 0;">Advanced</div>
<div style="position:absolute;left:47.50px;top:287.00px;white-space:pre;font:bold 6.9px/6.9px 'Liberation Sans', sans-serif;color:#000;transform:scaleX(0.8418);transform-origin:0 0;">Actions to be Performed:</div>
<div style="position:absolute;left:46.60px;top:294.60px;width:103.80px;height:121.70px;background:#fff;border-top:0.8px solid #a8b8d0;border-left:0.8px solid #a8b8d0"></div>
<div style="position:absolute;left:50.80px;top:297.00px;white-space:pre;font:normal 6.4px/6.4px 'Liberation Sans', sans-serif;color:#101010;transform:scaleX(0.7865);transform-origin:0 0;">Common</div>
<div style="position:absolute;left:54.00px;top:303.00px;width:0.60px;height:5.30px;background:#c8c8c8"></div>
<div style="position:absolute;left:54.00px;top:308.00px;width:4.50px;height:0.60px;background:#c8c8c8"></div>
<div style="position:absolute;left:58.70px;top:304.00px;width:46.10px;height:7.50px;background:#ece9d8"></div>
<div style="position:absolute;left:59.50px;top:305.00px;white-space:pre;font:normal 6.4px/6.4px 'Liberation Sans', sans-serif;color:#101010;transform:scaleX(0.8189);transform-origin:0 0;">Cyclic Voltammetry</div>
<div style="position:absolute;left:188.80px;top:287.00px;white-space:pre;font:bold 6.9px/6.9px 'Liberation Sans', sans-serif;color:#000;transform:scaleX(0.8404);transform-origin:0 0;">Properties for Cyclic Voltammetry</div>
<div style="position:absolute;left:150.50px;top:293.20px;width:194.60px;height:39.00px;border:0.8px solid #a4b8d4;background:#ece9d8"></div>
<div style="position:absolute;left:151.30px;top:294.00px;width:193.00px;height:9.30px;background:linear-gradient(#f0efe6,#ebe9dc)"></div>
<div style="position:absolute;left:151.30px;top:302.90px;width:193.00px;height:1.10px;background:#d8d4c0"></div>
<div style="position:absolute;left:202.70px;top:295.50px;width:0.70px;height:6.70px;background:#cbc7b4"></div>
<div style="position:absolute;left:235.70px;top:295.50px;width:0.70px;height:6.70px;background:#cbc7b4"></div>
<div style="position:absolute;left:266.70px;top:295.50px;width:0.70px;height:6.70px;background:#cbc7b4"></div>
<div style="position:absolute;left:299.70px;top:295.50px;width:0.70px;height:6.70px;background:#cbc7b4"></div>
<div style="position:absolute;left:155.80px;top:297.00px;white-space:pre;font:normal 6.4px/6.4px 'Liberation Sans', sans-serif;color:#303030;transform:scaleX(0.8286);transform-origin:0 0;">Endpoint Proper...</div>
<div style="position:absolute;left:207.20px;top:297.00px;white-space:pre;font:normal 6.4px/6.4px 'Liberation Sans', sans-serif;color:#303030;transform:scaleX(0.8819);transform-origin:0 0;">Value</div>
<div style="position:absolute;left:239.80px;top:297.00px;white-space:pre;font:normal 6.4px/6.4px 'Liberation Sans', sans-serif;color:#303030;transform:scaleX(0.8646);transform-origin:0 0;">Versus</div>
<div style="position:absolute;left:271.20px;top:297.00px;white-space:pre;font:normal 6.4px/6.4px 'Liberation Sans', sans-serif;color:#303030;transform:scaleX(0.8783);transform-origin:0 0;">Vertex...</div>
<div style="position:absolute;left:305.00px;top:297.00px;white-space:pre;font:normal 6.4px/6.4px 'Liberation Sans', sans-serif;color:#303030;transform:scaleX(0.8466);transform-origin:0 0;">Acquire at Hold</div>
<div style="position:absolute;left:153.70px;top:306.00px;white-space:pre;font:normal 6.4px/6.4px 'Liberation Sans', sans-serif;color:#101010;transform:scaleX(0.8269);transform-origin:0 0;">Initial Potential [V]</div>
<div style="position:absolute;left:205.70px;top:306.00px;white-space:pre;font:normal 6.4px/6.4px 'Liberation Sans', sans-serif;color:#101010;transform:scaleX(0.9336);transform-origin:0 0;">0.6</div>
<div style="position:absolute;left:238.70px;top:306.00px;white-space:pre;font:normal 6.4px/6.4px 'Liberation Sans', sans-serif;color:#101010;transform:scaleX(0.8662);transform-origin:0 0;">vs Ref</div>
<div style="position:absolute;left:238.70px;top:310.90px;width:15.70px;height:0.60px;background:#404040"></div>
<div style="position:absolute;left:153.70px;top:313.00px;white-space:pre;font:normal 6.4px/6.4px 'Liberation Sans', sans-serif;color:#101010;transform:scaleX(0.8333);transform-origin:0 0;">Vertex Potential [V]</div>
<div style="position:absolute;left:205.70px;top:313.00px;white-space:pre;font:normal 6.4px/6.4px 'Liberation Sans', sans-serif;color:#101010;transform:scaleX(0.8624);transform-origin:0 0;">-0.4</div>
<div style="position:absolute;left:238.70px;top:313.00px;white-space:pre;font:normal 6.4px/6.4px 'Liberation Sans', sans-serif;color:#101010;transform:scaleX(0.8662);transform-origin:0 0;">vs Ref</div>
<div style="position:absolute;left:238.70px;top:317.90px;width:15.70px;height:0.60px;background:#404040"></div>
<div style="position:absolute;left:153.70px;top:320.00px;white-space:pre;font:normal 6.4px/6.4px 'Liberation Sans', sans-serif;color:#101010;transform:scaleX(0.8284);transform-origin:0 0;">Final Potential [V]</div>
<div style="position:absolute;left:205.70px;top:320.00px;white-space:pre;font:normal 6.4px/6.4px 'Liberation Sans', sans-serif;color:#101010;transform:scaleX(0.9336);transform-origin:0 0;">0.6</div>
<div style="position:absolute;left:238.70px;top:320.00px;white-space:pre;font:normal 6.4px/6.4px 'Liberation Sans', sans-serif;color:#101010;transform:scaleX(0.8662);transform-origin:0 0;">vs Ref</div>
<div style="position:absolute;left:238.70px;top:324.90px;width:15.70px;height:0.60px;background:#404040"></div>
<div style="position:absolute;left:270.20px;top:313.00px;white-space:pre;font:normal 6.4px/6.4px 'Liberation Sans', sans-serif;color:#101010;">0</div>
<div style="position:absolute;left:303.50px;top:313.00px;white-space:pre;font:normal 6.4px/6.4px 'Liberation Sans', sans-serif;color:#101010;transform:scaleX(0.8623);transform-origin:0 0;">Yes</div>
<div style="position:absolute;left:303.50px;top:317.90px;width:9.00px;height:0.60px;background:#404040"></div>
<div style="position:absolute;left:150.50px;top:335.40px;width:94.20px;height:31.80px;border:0.8px solid #a4b8d4;background:#ece9d8"></div>
<div style="position:absolute;left:151.30px;top:336.20px;width:92.60px;height:9.60px;background:linear-gradient(#f0efe6,#ebe9dc)"></div>
<div style="position:absolute;left:151.30px;top:345.50px;width:92.60px;height:1.10px;background:#d8d4c0"></div>
<div style="position:absolute;left:202.70px;top:337.50px;width:0.70px;height:7.00px;background:#cbc7b4"></div>
<div style="position:absolute;left:155.80px;top:340.00px;white-space:pre;font:normal 6.4px/6.4px 'Liberation Sans', sans-serif;color:#303030;transform:scaleX(0.8181);transform-origin:0 0;">Scan Properties</div>
<div style="position:absolute;left:208.00px;top:340.00px;white-space:pre;font:normal 6.4px/6.4px 'Liberation Sans', sans-serif;color:#303030;transform:scaleX(0.8693);transform-origin:0 0;">Value</div>
<div style="position:absolute;left:153.70px;top:348.00px;white-space:pre;font:normal 6.4px/6.4px 'Liberation Sans', sans-serif;color:#101010;transform:scaleX(0.8779);transform-origin:0 0;">Scan Rate (V/s)</div>
<div style="position:absolute;left:206.80px;top:348.00px;white-space:pre;font:normal 6.4px/6.4px 'Liberation Sans', sans-serif;color:#101010;transform:scaleX(0.8432);transform-origin:0 0;">0.05</div>
<div style="position:absolute;left:153.70px;top:355.00px;white-space:pre;font:normal 6.4px/6.4px 'Liberation Sans', sans-serif;color:#101010;transform:scaleX(0.8473);transform-origin:0 0;">Total Points</div>
<div style="position:absolute;left:206.80px;top:355.00px;white-space:pre;font:normal 6.4px/6.4px 'Liberation Sans', sans-serif;color:#101010;transform:scaleX(0.8440);transform-origin:0 0;">2000</div>
<div style="position:absolute;left:651.40px;top:37.40px;width:146.50px;height:375.40px;background:#6b7fe0;border-radius:5px 5px 0 0"></div>
<div style="position:absolute;left:651.40px;top:37.40px;width:146.50px;height:14.60px;background:linear-gradient(#a6bdf0 0%,#8ca7e9 10%,#7893df 32%,#7a96e0 62%,#86a6ec 80%,#80a0e8 92%,#7088da 100%);border-radius:5px 5px 0 0"></div>
<div style="position:absolute;left:783.90px;top:37.40px;width:14.00px;height:14.60px;background:linear-gradient(90deg,rgba(96,104,214,0) 0%,rgba(96,104,214,0.55) 80%,rgba(96,104,214,0.7) 100%);border-radius:0 5px 0 0"></div>
<div style="position:absolute;left:655.60px;top:43.60px;white-space:pre;font:bold 6.6px/6.6px 'Liberation Mono', monospace;color:#dce4f8;">Data View - 46 Points (All Segm...</div>
<div style="position:absolute;left:653.50px;top:52.00px;width:142.10px;height:358.80px;background:#ece9d8"></div>
<div style="position:absolute;left:653.50px;top:66.80px;width:142.10px;height:1.10px;background:#4a4840"></div>
<div style="position:absolute;left:653.20px;top:52.00px;width:142.40px;height:0.80px;background:#5a5a6a"></div>
<div style="position:absolute;left:653.20px;top:52.00px;width:0.80px;height:358.80px;background:#55534a"></div>
<div style="position:absolute;left:659.40px;top:54.70px;width:7.30px;height:7.50px;background:#f4f4f0;border:0.6px solid #a8b0c8;border-radius:1px"></div>
<svg style="position:absolute;left:659.40px;top:54.70px;" width="7.3" height="7.5" viewBox="0 0 7.3 7.5"><path d="M1.5 2 L5.8 2 L5.8 3.6 L3.65 6.2 L1.5 3.6Z" fill="#1830b0"/><rect x="2.6" y="1.3" width="2.1" height="1.6" fill="#101840"/></svg>
<div style="position:absolute;left:674.50px;top:54.70px;width:8.00px;height:7.50px;background:#f4f4f0;border:0.6px solid #a8b0c8;border-radius:1px"></div>
<svg style="position:absolute;left:674.50px;top:54.70px;" width="8" height="7.5" viewBox="0 0 8 7.5"><rect x="2" y="2" width="4.5" height="4.2" fill="#fff" stroke="#3040c0" stroke-width="0.8"/><path d="M2.8 3.8 L4 5.4 L6.8 1.4" stroke="#e02020" stroke-width="0.9" fill="none"/></svg>
<div style="position:absolute;left:653.50px;top:67.90px;width:142.10px;height:334.90px;background:#fff"></div>
<div style="position:absolute;left:653.50px;top:67.90px;width:142.10px;height:9.70px;background:linear-gradient(#f6f5ee,#ebe9dc 80%,#d8d4c4)"></div>
<div style="position:absolute;left:697.50px;top:69.50px;width:0.70px;height:7.00px;background:#cfcbb8"></div>
<div style="position:absolute;left:742.70px;top:69.50px;width:0.70px;height:7.00px;background:#cfcbb8"></div>
<div style="position:absolute;left:787.80px;top:69.50px;width:0.70px;height:7.00px;background:#cfcbb8"></div>
<div style="position:absolute;left:657.80px;top:70.30px;white-space:pre;font:normal 5.6px/5.6px 'Liberation Mono', monospace;color:#101010;transform:scaleX(0.8690);transform-origin:0 0;">Potential...</div>
<div style="position:absolute;left:703.40px;top:70.30px;white-space:pre;font:normal 5.6px/5.6px 'Liberation Mono', monospace;color:#101010;transform:scaleX(0.8690);transform-origin:0 0;">Current (A)</div>
<div style="position:absolute;left:747.50px;top:70.30px;white-space:pre;font:normal 5.6px/5.6px 'Liberation Mono', monospace;color:#101010;transform:scaleX(0.8690);transform-origin:0 0;">Elapsed T...</div>
<div style="position:absolute;left:791.00px;top:70.30px;white-space:pre;font:normal 5.6px/5.6px 'Liberation Mono', monospace;color:#101010;transform:scaleX(0.8690);transform-origin:0 0;">I</div>
<div style="position:absolute;left:655.40px;top:77.60px;width:140.20px;height:297.85px;background:#ffff00"></div>
<svg style="position:absolute;left:0.00px;top:0.00px;" width="800" height="449" viewBox="0 0 800 449"><line x1="655.4" y1="77.60" x2="795.6" y2="77.60" stroke="#e6e4c8" stroke-width="0.7"/><line x1="655.4" y1="84.07" x2="795.6" y2="84.07" stroke="#e6e4c8" stroke-width="0.7"/><line x1="655.4" y1="90.55" x2="795.6" y2="90.55" stroke="#e6e4c8" stroke-width="0.7"/><line x1="655.4" y1="97.02" x2="795.6" y2="97.02" stroke="#e6e4c8" stroke-width="0.7"/><line x1="655.4" y1="103.50" x2="795.6" y2="103.50" stroke="#e6e4c8" stroke-width="0.7"/><line x1="655.4" y1="109.97" x2="795.6" y2="109.97" stroke="#e6e4c8" stroke-width="0.7"/><line x1="655.4" y1="116.45" x2="795.6" y2="116.45" stroke="#e6e4c8" stroke-width="0.7"/><line x1="655.4" y1="122.92" x2="795.6" y2="122.92" stroke="#e6e4c8" stroke-width="0.7"/><line x1="655.4" y1="129.40" x2="795.6" y2="129.40" stroke="#e6e4c8" stroke-width="0.7"/><line x1="655.4" y1="135.88" x2="795.6" y2="135.88" stroke="#e6e4c8" stroke-width="0.7"/><line x1="655.4" y1="142.35" x2="795.6" y2="142.35" stroke="#e6e4c8" stroke-width="0.7"/><line x1="655.4" y1="148.82" x2="795.6" y2="148.82" stroke="#e6e4c8" stroke-width="0.7"/><line x1="655.4" y1="155.30" x2="795.6" y2="155.30" stroke="#e6e4c8" stroke-width="0.7"/><line x1="655.4" y1="161.77" x2="795.6" y2="161.77" stroke="#e6e4c8" stroke-width="0.7"/><line x1="655.4" y1="168.25" x2="795.6" y2="168.25" stroke="#e6e4c8" stroke-width="0.7"/><line x1="655.4" y1="174.72" x2="795.6" y2="174.72" stroke="#e6e4c8" stroke-width="0.7"/><line x1="655.4" y1="181.20" x2="795.6" y2="181.20" stroke="#e6e4c8" stroke-width="0.7"/><line x1="655.4" y1="187.67" x2="795.6" y2="187.67" stroke="#e6e4c8" stroke-width="0.7"/><line x1="655.4" y1="194.15" x2="795.6" y2="194.15" stroke="#e6e4c8" stroke-width="0.7"/><line x1="655.4" y1="200.62" x2="795.6" y2="200.62" stroke="#e6e4c8" stroke-width="0.7"/><line x1="655.4" y1="207.10" x2="795.6" y2="207.10" stroke="#e6e4c8" stroke-width="0.7"/><line x1="655.4" y1="213.57" x2="795.6" y2="213.57" stroke="#e6e4c8" stroke-width="0.7"/><line x1="655.4" y1="220.05" x2="795.6" y2="220.05" stroke="#e6e4c8" stroke-width="0.7"/><line x1="655.4" y1="226.52" x2="795.6" y2="226.52" stroke="#e6e4c8" stroke-width="0.7"/><line x1="655.4" y1="233.00" x2="795.6" y2="233.00" stroke="#e6e4c8" stroke-width="0.7"/><line x1="655.4" y1="239.47" x2="795.6" y2="239.47" stroke="#e6e4c8" stroke-width="0.7"/><line x1="655.4" y1="245.95" x2="795.6" y2="245.95" stroke="#e6e4c8" stroke-width="0.7"/><line x1="655.4" y1="252.42" x2="795.6" y2="252.42" stroke="#e6e4c8" stroke-width="0.7"/><line x1="655.4" y1="258.90" x2="795.6" y2="258.90" stroke="#e6e4c8" stroke-width="0.7"/><line x1="655.4" y1="265.38" x2="795.6" y2="265.38" stroke="#e6e4c8" stroke-width="0.7"/><line x1="655.4" y1="271.85" x2="795.6" y2="271.85" stroke="#e6e4c8" stroke-width="0.7"/><line x1="655.4" y1="278.32" x2="795.6" y2="278.32" stroke="#e6e4c8" stroke-width="0.7"/><line x1="655.4" y1="284.80" x2="795.6" y2="284.80" stroke="#e6e4c8" stroke-width="0.7"/><line x1="655.4" y1="291.27" x2="795.6" y2="291.27" stroke="#e6e4c8" stroke-width="0.7"/><line x1="655.4" y1="297.75" x2="795.6" y2="297.75" stroke="#e6e4c8" stroke-width="0.7"/><line x1="655.4" y1="304.23" x2="795.6" y2="304.23" stroke="#e6e4c8" stroke-width="0.7"/><line x1="655.4" y1="310.70" x2="795.6" y2="310.70" stroke="#e6e4c8" stroke-width="0.7"/><line x1="655.4" y1="317.17" x2="795.6" y2="317.17" stroke="#e6e4c8" stroke-width="0.7"/><line x1="655.4" y1="323.65" x2="795.6" y2="323.65" stroke="#e6e4c8" stroke-width="0.7"/><line x1="655.4" y1="330.12" x2="795.6" y2="330.12" stroke="#e6e4c8" stroke-width="0.7"/><line x1="655.4" y1="336.60" x2="795.6" y2="336.60" stroke="#e6e4c8" stroke-width="0.7"/><line x1="655.4" y1="343.07" x2="795.6" y2="343.07" stroke="#e6e4c8" stroke-width="0.7"/><line x1="655.4" y1="349.55" x2="795.6" y2="349.55" stroke="#e6e4c8" stroke-width="0.7"/><line x1="655.4" y1="356.02" x2="795.6" y2="356.02" stroke="#e6e4c8" stroke-width="0.7"/><line x1="655.4" y1="362.50" x2="795.6" y2="362.50" stroke="#e6e4c8" stroke-width="0.7"/><line x1="655.4" y1="368.98" x2="795.6" y2="368.98" stroke="#e6e4c8" stroke-width="0.7"/><line x1="655.4" y1="375.45" x2="795.6" y2="375.45" stroke="#e6e4c8" stroke-width="0.7"/><line x1="655.4" y1="381.92" x2="795.6" y2="381.92" stroke="#ecebdc" stroke-width="0.7"/><line x1="655.4" y1="388.40" x2="795.6" y2="388.40" stroke="#ecebdc" stroke-width="0.7"/><line x1="655.4" y1="394.88" x2="795.6" y2="394.88" stroke="#ecebdc" stroke-width="0.7"/><line x1="655.4" y1="401.35" x2="795.6" y2="401.35" stroke="#ecebdc" stroke-width="0.7"/><line x1="697.8" y1="77.6" x2="697.8" y2="402.8" stroke="#e6e4c8" stroke-width="0.7"/><line x1="743" y1="77.6" x2="743" y2="402.8" stroke="#e6e4c8" stroke-width="0.7"/><line x1="788.1" y1="77.6" x2="788.1" y2="402.8" stroke="#e6e4c8" stroke-width="0.7"/></svg>
<div style="position:absolute;left:656.60px;top:78.80px;white-space:pre;font:bold 6.3px/6.3px 'Liberation Mono', monospace;color:#000;transform:scaleX(0.7804);transform-origin:0 0;">-4.47  V  </div>
<div style="position:absolute;left:701.10px;top:78.80px;white-space:pre;font:bold 6.3px/6.3px 'Liberation Mono', monospace;color:#000;transform:scaleX(0.7804);transform-origin:0 0;">8.142 fA</div>
<div style="position:absolute;left:746.00px;top:78.80px;white-space:pre;font:bold 6.3px/6.3px 'Liberation Mono', monospace;color:#000;transform:scaleX(0.7804);transform-origin:0 0;">0.02</div>
<div style="position:absolute;left:791.00px;top:78.80px;white-space:pre;font:bold 6.3px/6.3px 'Liberation Mono', monospace;color:#000;transform:scaleX(0.7804);transform-origin:0 0;">20</div>
<div style="position:absolute;left:656.60px;top:85.27px;white-space:pre;font:bold 6.3px/6.3px 'Liberation Mono', monospace;color:#000;transform:scaleX(0.7804);transform-origin:0 0;">-4.343  V </div>
<div style="position:absolute;left:701.10px;top:85.27px;white-space:pre;font:bold 6.3px/6.3px 'Liberation Mono', monospace;color:#000;transform:scaleX(0.7804);transform-origin:0 0;">122.623 nA</div>
<div style="position:absolute;left:746.00px;top:85.27px;white-space:pre;font:bold 6.3px/6.3px 'Liberation Mono', monospace;color:#000;transform:scaleX(0.7804);transform-origin:0 0;">0.04</div>
<div style="position:absolute;left:791.00px;top:85.27px;white-space:pre;font:bold 6.3px/6.3px 'Liberation Mono', monospace;color:#000;transform:scaleX(0.7804);transform-origin:0 0;">2</div>
<div style="position:absolute;left:656.60px;top:91.75px;white-space:pre;font:bold 6.3px/6.3px 'Liberation Mono', monospace;color:#000;transform:scaleX(0.7804);transform-origin:0 0;">-4.248  V </div>
<div style="position:absolute;left:701.10px;top:91.75px;white-space:pre;font:bold 6.3px/6.3px 'Liberation Mono', monospace;color:#000;transform:scaleX(0.7804);transform-origin:0 0;">-587.319 pA</div>
<div style="position:absolute;left:746.00px;top:91.75px;white-space:pre;font:bold 6.3px/6.3px 'Liberation Mono', monospace;color:#000;transform:scaleX(0.7804);transform-origin:0 0;">0.06</div>
<div style="position:absolute;left:791.00px;top:91.75px;white-space:pre;font:bold 6.3px/6.3px 'Liberation Mono', monospace;color:#000;transform:scaleX(0.7804);transform-origin:0 0;">20</div>
<div style="position:absolute;left:656.60px;top:98.22px;white-space:pre;font:bold 6.3px/6.3px 'Liberation Mono', monospace;color:#000;transform:scaleX(0.7804);transform-origin:0 0;">-4.164  V </div>
<div style="position:absolute;left:701.10px;top:98.22px;white-space:pre;font:bold 6.3px/6.3px 'Liberation Mono', monospace;color:#000;transform:scaleX(0.7804);transform-origin:0 0;">8.253 nA</div>
<div style="position:absolute;left:746.00px;top:98.22px;white-space:pre;font:bold 6.3px/6.3px 'Liberation Mono', monospace;color:#000;transform:scaleX(0.7804);transform-origin:0 0;">0.08</div>
<div style="position:absolute;left:791.00px;top:98.22px;white-space:pre;font:bold 6.3px/6.3px 'Liberation Mono', monospace;color:#000;transform:scaleX(0.7804);transform-origin:0 0;">20</div>
<div style="position:absolute;left:656.60px;top:104.70px;white-space:pre;font:bold 6.3px/6.3px 'Liberation Mono', monospace;color:#000;transform:scaleX(0.7804);transform-origin:0 0;">-4.096  V </div>
<div style="position:absolute;left:701.10px;top:104.70px;white-space:pre;font:bold 6.3px/6.3px 'Liberation Mono', monospace;color:#000;transform:scaleX(0.7804);transform-origin:0 0;">-61.258 fA</div>
<div style="position:absolute;left:746.00px;top:104.70px;white-space:pre;font:bold 6.3px/6.3px 'Liberation Mono', monospace;color:#000;transform:scaleX(0.7804);transform-origin:0 0;">0.1</div>
<div style="position:absolute;left:791.00px;top:104.70px;white-space:pre;font:bold 6.3px/6.3px 'Liberation Mono', monospace;color:#000;transform:scaleX(0.7804);transform-origin:0 0;">2</div>
<div style="position:absolute;left:656.60px;top:111.17px;white-space:pre;font:bold 6.3px/6.3px 'Liberation Mono', monospace;color:#000;transform:scaleX(0.7804);transform-origin:0 0;">-4.031  V </div>
<div style="position:absolute;left:701.10px;top:111.17px;white-space:pre;font:bold 6.3px/6.3px 'Liberation Mono', monospace;color:#000;transform:scaleX(0.7804);transform-origin:0 0;">61.423 fA</div>
<div style="position:absolute;left:746.00px;top:111.17px;white-space:pre;font:bold 6.3px/6.3px 'Liberation Mono', monospace;color:#000;transform:scaleX(0.7804);transform-origin:0 0;">0.12</div>
<div style="position:absolute;left:791.00px;top:111.17px;white-space:pre;font:bold 6.3px/6.3px 'Liberation Mono', monospace;color:#000;transform:scaleX(0.7804);transform-origin:0 0;">2</div>
<div style="position:absolute;left:656.60px;top:117.65px;white-space:pre;font:bold 6.3px/6.3px 'Liberation Mono', monospace;color:#000;transform:scaleX(0.7804);transform-origin:0 0;">-3.973  V </div>
<div style="position:absolute;left:701.10px;top:117.65px;white-space:pre;font:bold 6.3px/6.3px 'Liberation Mono', monospace;color:#000;transform:scaleX(0.7804);transform-origin:0 0;">82.536 nA</div>
<div style="position:absolute;left:746.00px;top:117.65px;white-space:pre;font:bold 6.3px/6.3px 'Liberation Mono', monospace;color:#000;transform:scaleX(0.7804);transform-origin:0 0;">0.14</div>
<div style="position:absolute;left:791.00px;top:117.65px;white-space:pre;font:bold 6.3px/6.3px 'Liberation Mono', monospace;color:#000;transform:scaleX(0.7804);transform-origin:0 0;">2</div>
<div style="position:absolute;left:656.60px;top:124.12px;white-space:pre;font:bold 6.3px/6.3px 'Liberation Mono', monospace;color:#000;transform:scaleX(0.7804);transform-origin:0 0;">-3.927  V </div>
<div style="position:absolute;left:701.10px;top:124.12px;white-space:pre;font:bold 6.3px/6.3px 'Liberation Mono', monospace;color:#000;transform:scaleX(0.7804);transform-origin:0 0;">-61.258 fA</div>
<div style="position:absolute;left:746.00px;top:124.12px;white-space:pre;font:bold 6.3px/6.3px 'Liberation Mono', monospace;color:#000;transform:scaleX(0.7804);transform-origin:0 0;">0.16</div>
<div style="position:absolute;left:791.00px;top:124.12px;white-space:pre;font:bold 6.3px/6.3px 'Liberation Mono', monospace;color:#000;transform:scaleX(0.7804);transform-origin:0 0;">2</div>
<div style="position:absolute;left:656.60px;top:130.60px;white-space:pre;font:bold 6.3px/6.3px 'Liberation Mono', monospace;color:#000;transform:scaleX(0.7804);transform-origin:0 0;">-3.891  V </div>
<div style="position:absolute;left:701.10px;top:130.60px;white-space:pre;font:bold 6.3px/6.3px 'Liberation Mono', monospace;color:#000;transform:scaleX(0.7804);transform-origin:0 0;">61.423 fA</div>
<div style="position:absolute;left:746.00px;top:130.60px;white-space:pre;font:bold 6.3px/6.3px 'Liberation Mono', monospace;color:#000;transform:scaleX(0.7804);transform-origin:0 0;">0.18</div>
<div style="position:absolute;left:791.00px;top:130.60px;white-space:pre;font:bold 6.3px/6.3px 'Liberation Mono', monospace;color:#000;transform:scaleX(0.7804);transform-origin:0 0;">2</div>
<div style="position:absolute;left:656.60px;top:137.07px;white-space:pre;font:bold 6.3px/6.3px 'Liberation Mono', monospace;color:#000;transform:scaleX(0.7804);transform-origin:0 0;">-3.847  V </div>
<div style="position:absolute;left:701.10px;top:137.07px;white-space:pre;font:bold 6.3px/6.3px 'Liberation Mono', monospace;color:#000;transform:scaleX(0.7804);transform-origin:0 0;">82.536 nA</div>
<div style="position:absolute;left:746.00px;top:137.07px;white-space:pre;font:bold 6.3px/6.3px 'Liberation Mono', monospace;color:#000;transform:scaleX(0.7804);transform-origin:0 0;">0.2</div>
<div style="position:absolute;left:791.00px;top:137.07px;white-space:pre;font:bold 6.3px/6.3px 'Liberation Mono', monospace;color:#000;transform:scaleX(0.7804);transform-origin:0 0;">2</div>
<div style="position:absolute;left:656.60px;top:143.55px;white-space:pre;font:bold 6.3px/6.3px 'Liberation Mono', monospace;color:#000;transform:scaleX(0.7804);transform-origin:0 0;">-3.814  V </div>
<div style="position:absolute;left:701.10px;top:143.55px;white-space:pre;font:bold 6.3px/6.3px 'Liberation Mono', monospace;color:#000;transform:scaleX(0.7804);transform-origin:0 0;">61.423 fA</div>
<div style="position:absolute;left:746.00px;top:143.55px;white-space:pre;font:bold 6.3px/6.3px 'Liberation Mono', monospace;color:#000;transform:scaleX(0.7804);transform-origin:0 0;">0.22</div>
<div style="position:absolute;left:791.00px;top:143.55px;white-space:pre;font:bold 6.3px/6.3px 'Liberation Mono', monospace;color:#000;transform:scaleX(0.7804);transform-origin:0 0;">2</div>
<div style="position:absolute;left:656.60px;top:150.02px;white-space:pre;font:bold 6.3px/6.3px 'Liberation Mono', monospace;color:#000;transform:scaleX(0.7804);transform-origin:0 0;">-3.784  V </div>
<div style="position:absolute;left:701.10px;top:150.02px;white-space:pre;font:bold 6.3px/6.3px 'Liberation Mono', monospace;color:#000;transform:scaleX(0.7804);transform-origin:0 0;">82.536 nA</div>
<div style="position:absolute;left:746.00px;top:150.02px;white-space:pre;font:bold 6.3px/6.3px 'Liberation Mono', monospace;color:#000;transform:scaleX(0.7804);transform-origin:0 0;">0.24</div>
<div style="position:absolute;left:791.00px;top:150.02px;white-space:pre;font:bold 6.3px/6.3px 'Liberation Mono', monospace;color:#000;transform:scaleX(0.7804);transform-origin:0 0;">2</div>
<div style="position:absolute;left:656.60px;top:156.50px;white-space:pre;font:bold 6.3px/6.3px 'Liberation Mono', monospace;color:#000;transform:scaleX(0.7804);transform-origin:0 0;">-3.758  V </div>
<div style="position:absolute;left:701.10px;top:156.50px;white-space:pre;font:bold 6.3px/6.3px 'Liberation Mono', monospace;color:#000;transform:scaleX(0.7804);transform-origin:0 0;">82.536 nA</div>
<div style="position:absolute;left:746.00px;top:156.50px;white-space:pre;font:bold 6.3px/6.3px 'Liberation Mono', monospace;color:#000;transform:scaleX(0.7804);transform-origin:0 0;">0.26</div>
<div style="position:absolute;left:791.00px;top:156.50px;white-space:pre;font:bold 6.3px/6.3px 'Liberation Mono', monospace;color:#000;transform:scaleX(0.7804);transform-origin:0 0;">2</div>
<div style="position:absolute;left:656.60px;top:162.97px;white-space:pre;font:bold 6.3px/6.3px 'Liberation Mono', monospace;color:#000;transform:scaleX(0.7804);transform-origin:0 0;">-3.737  V </div>
<div style="position:absolute;left:701.10px;top:162.97px;white-space:pre;font:bold 6.3px/6.3px 'Liberation Mono', monospace;color:#000;transform:scaleX(0.7804);transform-origin:0 0;">82.536 nA</div>
<div style="position:absolute;left:746.00px;top:162.97px;white-space:pre;font:bold 6.3px/6.3px 'Liberation Mono', monospace;color:#000;transform:scaleX(0.7804);transform-origin:0 0;">0.28</div>
<div style="position:absolute;left:791.00px;top:162.97px;white-space:pre;font:bold 6.3px/6.3px 'Liberation Mono', monospace;color:#000;transform:scaleX(0.7804);transform-origin:0 0;">2</div>
<div style="position:absolute;left:656.60px;top:169.45px;white-space:pre;font:bold 6.3px/6.3px 'Liberation Mono', monospace;color:#000;transform:scaleX(0.7804);transform-origin:0 0;">-3.722  V </div>
<div style="position:absolute;left:701.10px;top:169.45px;white-space:pre;font:bold 6.3px/6.3px 'Liberation Mono', monospace;color:#000;transform:scaleX(0.7804);transform-origin:0 0;">82.536 nA</div>
<div style="position:absolute;left:746.00px;top:169.45px;white-space:pre;font:bold 6.3px/6.3px 'Liberation Mono', monospace;color:#000;transform:scaleX(0.7804);transform-origin:0 0;">0.3</div>
<div style="position:absolute;left:791.00px;top:169.45px;white-space:pre;font:bold 6.3px/6.3px 'Liberation Mono', monospace;color:#000;transform:scaleX(0.7804);transform-origin:0 0;">2</div>
<div style="position:absolute;left:656.60px;top:175.92px;white-space:pre;font:bold 6.3px/6.3px 'Liberation Mono', monospace;color:#000;transform:scaleX(0.7804);transform-origin:0 0;">-3.703  V </div>
<div style="position:absolute;left:701.10px;top:175.92px;white-space:pre;font:bold 6.3px/6.3px 'Liberation Mono', monospace;color:#000;transform:scaleX(0.7804);transform-origin:0 0;">82.536 nA</div>
<div style="position:absolute;left:746.00px;top:175.92px;white-space:pre;font:bold 6.3px/6.3px 'Liberation Mono', monospace;color:#000;transform:scaleX(0.7804);transform-origin:0 0;">0.32</div>
<div style="position:absolute;left:791.00px;top:175.92px;white-space:pre;font:bold 6.3px/6.3px 'Liberation Mono', monospace;color:#000;transform:scaleX(0.7804);transform-origin:0 0;">2</div>
<div style="position:absolute;left:656.60px;top:182.40px;white-space:pre;font:bold 6.3px/6.3px 'Liberation Mono', monospace;color:#000;transform:scaleX(0.7804);transform-origin:0 0;">-3.694  V </div>
<div style="position:absolute;left:701.10px;top:182.40px;white-space:pre;font:bold 6.3px/6.3px 'Liberation Mono', monospace;color:#000;transform:scaleX(0.7804);transform-origin:0 0;">-61.258 fA</div>
<div style="position:absolute;left:746.00px;top:182.40px;white-space:pre;font:bold 6.3px/6.3px 'Liberation Mono', monospace;color:#000;transform:scaleX(0.7804);transform-origin:0 0;">0.34</div>
<div style="position:absolute;left:791.00px;top:182.40px;white-space:pre;font:bold 6.3px/6.3px 'Liberation Mono', monospace;color:#000;transform:scaleX(0.7804);transform-origin:0 0;">2</div>
<div style="position:absolute;left:656.60px;top:188.87px;white-space:pre;font:bold 6.3px/6.3px 'Liberation Mono', monospace;color:#000;transform:scaleX(0.7804);transform-origin:0 0;">-3.682  V </div>
<div style="position:absolute;left:701.10px;top:188.87px;white-space:pre;font:bold 6.3px/6.3px 'Liberation Mono', monospace;color:#000;transform:scaleX(0.7804);transform-origin:0 0;">82.536 nA</div>
<div style="position:absolute;left:746.00px;top:188.87px;white-space:pre;font:bold 6.3px/6.3px 'Liberation Mono', monospace;color:#000;transform:scaleX(0.7804);transform-origin:0 0;">0.36</div>
<div style="position:absolute;left:791.00px;top:188.87px;white-space:pre;font:bold 6.3px/6.3px 'Liberation Mono', monospace;color:#000;transform:scaleX(0.7804);transform-origin:0 0;">2</div>
<div style="position:absolute;left:656.60px;top:195.35px;white-space:pre;font:bold 6.3px/6.3px 'Liberation Mono', monospace;color:#000;transform:scaleX(0.7804);transform-origin:0 0;">-3.675  V </div>
<div style="position:absolute;left:701.10px;top:195.35px;white-space:pre;font:bold 6.3px/6.3px 'Liberation Mono', monospace;color:#000;transform:scaleX(0.7804);transform-origin:0 0;">61.423 fA</div>
<div style="position:absolute;left:746.00px;top:195.35px;white-space:pre;font:bold 6.3px/6.3px 'Liberation Mono', monospace;color:#000;transform:scaleX(0.7804);transform-origin:0 0;">0.38</div>
<div style="position:absolute;left:791.00px;top:195.35px;white-space:pre;font:bold 6.3px/6.3px 'Liberation Mono', monospace;color:#000;transform:scaleX(0.7804);transform-origin:0 0;">2</div>
<div style="position:absolute;left:656.60px;top:201.82px;white-space:pre;font:bold 6.3px/6.3px 'Liberation Mono', monospace;color:#000;transform:scaleX(0.7804);transform-origin:0 0;">-3.665  V </div>
<div style="position:absolute;left:701.10px;top:201.82px;white-space:pre;font:bold 6.3px/6.3px 'Liberation Mono', monospace;color:#000;transform:scaleX(0.7804);transform-origin:0 0;">61.423 fA</div>
<div style="position:absolute;left:746.00px;top:201.82px;white-space:pre;font:bold 6.3px/6.3px 'Liberation Mono', monospace;color:#000;transform:scaleX(0.7804);transform-origin:0 0;">0.4</div>
<div style="position:absolute;left:791.00px;top:201.82px;white-space:pre;font:bold 6.3px/6.3px 'Liberation Mono', monospace;color:#000;transform:scaleX(0.7804);transform-origin:0 0;">2</div>
<div style="position:absolute;left:656.60px;top:208.30px;white-space:pre;font:bold 6.3px/6.3px 'Liberation Mono', monospace;color:#000;transform:scaleX(0.7804);transform-origin:0 0;">-3.658  V </div>
<div style="position:absolute;left:701.10px;top:208.30px;white-space:pre;font:bold 6.3px/6.3px 'Liberation Mono', monospace;color:#000;transform:scaleX(0.7804);transform-origin:0 0;">82.536 nA</div>
<div style="position:absolute;left:746.00px;top:208.30px;white-space:pre;font:bold 6.3px/6.3px 'Liberation Mono', monospace;color:#000;transform:scaleX(0.7804);transform-origin:0 0;">0.42</div>
<div style="position:absolute;left:791.00px;top:208.30px;white-space:pre;font:bold 6.3px/6.3px 'Liberation Mono', monospace;color:#000;transform:scaleX(0.7804);transform-origin:0 0;">2</div>
<div style="position:absolute;left:656.60px;top:214.77px;white-space:pre;font:bold 6.3px/6.3px 'Liberation Mono', monospace;color:#000;transform:scaleX(0.7804);transform-origin:0 0;">-3.653  V </div>
<div style="position:absolute;left:701.10px;top:214.77px;white-space:pre;font:bold 6.3px/6.3px 'Liberation Mono', monospace;color:#000;transform:scaleX(0.7804);transform-origin:0 0;">-61.258 fA</div>
<div style="position:absolute;left:746.00px;top:214.77px;white-space:pre;font:bold 6.3px/6.3px 'Liberation Mono', monospace;color:#000;transform:scaleX(0.7804);transform-origin:0 0;">0.44</div>
<div style="position:absolute;left:791.00px;top:214.77px;white-space:pre;font:bold 6.3px/6.3px 'Liberation Mono', monospace;color:#000;transform:scaleX(0.7804);transform-origin:0 0;">2</div>
<div style="position:absolute;left:656.60px;top:221.25px;white-space:pre;font:bold 6.3px/6.3px 'Liberation Mono', monospace;color:#000;transform:scaleX(0.7804);transform-origin:0 0;">-3.642  V </div>
<div style="position:absolute;left:701.10px;top:221.25px;white-space:pre;font:bold 6.3px/6.3px 'Liberation Mono', monospace;color:#000;transform:scaleX(0.7804);transform-origin:0 0;">61.423 fA</div>
<div style="position:absolute;left:746.00px;top:221.25px;white-space:pre;font:bold 6.3px/6.3px 'Liberation Mono', monospace;color:#000;transform:scaleX(0.7804);transform-origin:0 0;">0.46</div>
<div style="position:absolute;left:791.00px;top:221.25px;white-space:pre;font:bold 6.3px/6.3px 'Liberation Mono', monospace;color:#000;transform:scaleX(0.7804);transform-origin:0 0;">2</div>
<div style="position:absolute;left:656.60px;top:227.72px;white-space:pre;font:bold 6.3px/6.3px 'Liberation Mono', monospace;color:#000;transform:scaleX(0.7804);transform-origin:0 0;">-3.639  V </div>
<div style="position:absolute;left:701.10px;top:227.72px;white-space:pre;font:bold 6.3px/6.3px 'Liberation Mono', monospace;color:#000;transform:scaleX(0.7804);transform-origin:0 0;">61.423 fA</div>
<div style="position:absolute;left:746.00px;top:227.72px;white-space:pre;font:bold 6.3px/6.3px 'Liberation Mono', monospace;color:#000;transform:scaleX(0.7804);transform-origin:0 0;">0.48</div>
<div style="position:absolute;left:791.00px;top:227.72px;white-space:pre;font:bold 6.3px/6.3px 'Liberation Mono', monospace;color:#000;transform:scaleX(0.7804);transform-origin:0 0;">2</div>
<div style="position:absolute;left:656.60px;top:234.20px;white-space:pre;font:bold 6.3px/6.3px 'Liberation Mono', monospace;color:#000;transform:scaleX(0.7804);transform-origin:0 0;">-3.636  V </div>
<div style="position:absolute;left:701.10px;top:234.20px;white-space:pre;font:bold 6.3px/6.3px 'Liberation Mono', monospace;color:#000;transform:scaleX(0.7804);transform-origin:0 0;">82.536 nA</div>
<div style="position:absolute;left:746.00px;top:234.20px;white-space:pre;font:bold 6.3px/6.3px 'Liberation Mono', monospace;color:#000;transform:scaleX(0.7804);transform-origin:0 0;">0.5</div>
<div style="position:absolute;left:791.00px;top:234.20px;white-space:pre;font:bold 6.3px/6.3px 'Liberation Mono', monospace;color:#000;transform:scaleX(0.7804);transform-origin:0 0;">2</div>
<div style="position:absolute;left:656.60px;top:240.67px;white-space:pre;font:bold 6.3px/6.3px 'Liberation Mono', monospace;color:#000;transform:scaleX(0.7804);transform-origin:0 0;">-3.634  V </div>
<div style="position:absolute;left:701.10px;top:240.67px;white-space:pre;font:bold 6.3px/6.3px 'Liberation Mono', monospace;color:#000;transform:scaleX(0.7804);transform-origin:0 0;">-61.258 fA</div>
<div style="position:absolute;left:746.00px;top:240.67px;white-space:pre;font:bold 6.3px/6.3px 'Liberation Mono', monospace;color:#000;transform:scaleX(0.7804);transform-origin:0 0;">0.52</div>
<div style="position:absolute;left:791.00px;top:240.67px;white-space:pre;font:bold 6.3px/6.3px 'Liberation Mono', monospace;color:#000;transform:scaleX(0.7804);transform-origin:0 0;">2</div>
<div style="position:absolute;left:656.60px;top:247.15px;white-space:pre;font:bold 6.3px/6.3px 'Liberation Mono', monospace;color:#000;transform:scaleX(0.7804);transform-origin:0 0;">-3.632  V </div>
<div style="position:absolute;left:701.10px;top:247.15px;white-space:pre;font:bold 6.3px/6.3px 'Liberation Mono', monospace;color:#000;transform:scaleX(0.7804);transform-origin:0 0;">82.536 nA</div>
<div style="position:absolute;left:746.00px;top:247.15px;white-space:pre;font:bold 6.3px/6.3px 'Liberation Mono', monospace;color:#000;transform:scaleX(0.7804);transform-origin:0 0;">0.54</div>
<div style="position:absolute;left:791.00px;top:247.15px;white-space:pre;font:bold 6.3px/6.3px 'Liberation Mono', monospace;color:#000;transform:scaleX(0.7804);transform-origin:0 0;">2</div>
<div style="position:absolute;left:656.60px;top:253.62px;white-space:pre;font:bold 6.3px/6.3px 'Liberation Mono', monospace;color:#000;transform:scaleX(0.7804);transform-origin:0 0;">-3.63  V  </div>
<div style="position:absolute;left:701.10px;top:253.62px;white-space:pre;font:bold 6.3px/6.3px 'Liberation Mono', monospace;color:#000;transform:scaleX(0.7804);transform-origin:0 0;">82.536 nA</div>
<div style="position:absolute;left:746.00px;top:253.62px;white-space:pre;font:bold 6.3px/6.3px 'Liberation Mono', monospace;color:#000;transform:scaleX(0.7804);transform-origin:0 0;">0.56</div>
<div style="position:absolute;left:791.00px;top:253.62px;white-space:pre;font:bold 6.3px/6.3px 'Liberation Mono', monospace;color:#000;transform:scaleX(0.7804);transform-origin:0 0;">2</div>
<div style="position:absolute;left:656.60px;top:260.10px;white-space:pre;font:bold 6.3px/6.3px 'Liberation Mono', monospace;color:#000;transform:scaleX(0.7804);transform-origin:0 0;">-3.63  V  </div>
<div style="position:absolute;left:701.10px;top:260.10px;white-space:pre;font:bold 6.3px/6.3px 'Liberation Mono', monospace;color:#000;transform:scaleX(0.7804);transform-origin:0 0;">61.423 fA</div>
<div style="position:absolute;left:746.00px;top:260.10px;white-space:pre;font:bold 6.3px/6.3px 'Liberation Mono', monospace;color:#000;transform:scaleX(0.7804);transform-origin:0 0;">0.58</div>
<div style="position:absolute;left:791.00px;top:260.10px;white-space:pre;font:bold 6.3px/6.3px 'Liberation Mono', monospace;color:#000;transform:scaleX(0.7804);transform-origin:0 0;">2</div>
<div style="position:absolute;left:656.60px;top:266.57px;white-space:pre;font:bold 6.3px/6.3px 'Liberation Mono', monospace;color:#000;transform:scaleX(0.7804);transform-origin:0 0;">-3.626  V </div>
<div style="position:absolute;left:701.10px;top:266.57px;white-space:pre;font:bold 6.3px/6.3px 'Liberation Mono', monospace;color:#000;transform:scaleX(0.7804);transform-origin:0 0;">61.423 fA</div>
<div style="position:absolute;left:746.00px;top:266.57px;white-space:pre;font:bold 6.3px/6.3px 'Liberation Mono', monospace;color:#000;transform:scaleX(0.7804);transform-origin:0 0;">0.6</div>
<div style="position:absolute;left:791.00px;top:266.57px;white-space:pre;font:bold 6.3px/6.3px 'Liberation Mono', monospace;color:#000;transform:scaleX(0.7804);transform-origin:0 0;">2</div>
<div style="position:absolute;left:656.60px;top:273.05px;white-space:pre;font:bold 6.3px/6.3px 'Liberation Mono', monospace;color:#000;transform:scaleX(0.7804);transform-origin:0 0;">-3.629  V </div>
<div style="position:absolute;left:701.10px;top:273.05px;white-space:pre;font:bold 6.3px/6.3px 'Liberation Mono', monospace;color:#000;transform:scaleX(0.7804);transform-origin:0 0;">-61.258 fA</div>
<div style="position:absolute;left:746.00px;top:273.05px;white-space:pre;font:bold 6.3px/6.3px 'Liberation Mono', monospace;color:#000;transform:scaleX(0.7804);transform-origin:0 0;">0.62</div>
<div style="position:absolute;left:791.00px;top:273.05px;white-space:pre;font:bold 6.3px/6.3px 'Liberation Mono', monospace;color:#000;transform:scaleX(0.7804);transform-origin:0 0;">2</div>
<div style="position:absolute;left:656.60px;top:279.52px;white-space:pre;font:bold 6.3px/6.3px 'Liberation Mono', monospace;color:#000;transform:scaleX(0.7804);transform-origin:0 0;">-3.626  V </div>
<div style="position:absolute;left:701.10px;top:279.52px;white-space:pre;font:bold 6.3px/6.3px 'Liberation Mono', monospace;color:#000;transform:scaleX(0.7804);transform-origin:0 0;">82.536 nA</div>
<div style="position:absolute;left:746.00px;top:279.52px;white-space:pre;font:bold 6.3px/6.3px 'Liberation Mono', monospace;color:#000;transform:scaleX(0.7804);transform-origin:0 0;">0.64</div>
<div style="position:absolute;left:791.00px;top:279.52px;white-space:pre;font:bold 6.3px/6.3px 'Liberation Mono', monospace;color:#000;transform:scaleX(0.7804);transform-origin:0 0;">2</div>
<div style="position:absolute;left:656.60px;top:286.00px;white-space:pre;font:bold 6.3px/6.3px 'Liberation Mono', monospace;color:#000;transform:scaleX(0.7804);transform-origin:0 0;">-3.622  V </div>
<div style="position:absolute;left:701.10px;top:286.00px;white-space:pre;font:bold 6.3px/6.3px 'Liberation Mono', monospace;color:#000;transform:scaleX(0.7804);transform-origin:0 0;">82.536 nA</div>
<div style="position:absolute;left:746.00px;top:286.00px;white-space:pre;font:bold 6.3px/6.3px 'Liberation Mono', monospace;color:#000;transform:scaleX(0.7804);transform-origin:0 0;">0.66</div>
<div style="position:absolute;left:791.00px;top:286.00px;white-space:pre;font:bold 6.3px/6.3px 'Liberation Mono', monospace;color:#000;transform:scaleX(0.7804);transform-origin:0 0;">2</div>
<div style="position:absolute;left:656.60px;top:292.47px;white-space:pre;font:bold 6.3px/6.3px 'Liberation Mono', monospace;color:#000;transform:scaleX(0.7804);transform-origin:0 0;">-3.624  V </div>
<div style="position:absolute;left:701.10px;top:292.47px;white-space:pre;font:bold 6.3px/6.3px 'Liberation Mono', monospace;color:#000;transform:scaleX(0.7804);transform-origin:0 0;">122.765 fA</div>
<div style="position:absolute;left:746.00px;top:292.47px;white-space:pre;font:bold 6.3px/6.3px 'Liberation Mono', monospace;color:#000;transform:scaleX(0.7804);transform-origin:0 0;">0.68</div>
<div style="position:absolute;left:791.00px;top:292.47px;white-space:pre;font:bold 6.3px/6.3px 'Liberation Mono', monospace;color:#000;transform:scaleX(0.7804);transform-origin:0 0;">2</div>
<div style="position:absolute;left:656.60px;top:298.95px;white-space:pre;font:bold 6.3px/6.3px 'Liberation Mono', monospace;color:#000;transform:scaleX(0.7804);transform-origin:0 0;">-3.626  V </div>
<div style="position:absolute;left:701.10px;top:298.95px;white-space:pre;font:bold 6.3px/6.3px 'Liberation Mono', monospace;color:#000;transform:scaleX(0.7804);transform-origin:0 0;">61.423 fA</div>
<div style="position:absolute;left:746.00px;top:298.95px;white-space:pre;font:bold 6.3px/6.3px 'Liberation Mono', monospace;color:#000;transform:scaleX(0.7804);transform-origin:0 0;">0.7</div>
<div style="position:absolute;left:791.00px;top:298.95px;white-space:pre;font:bold 6.3px/6.3px 'Liberation Mono', monospace;color:#000;transform:scaleX(0.7804);transform-origin:0 0;">2</div>
<div style="position:absolute;left:656.60px;top:305.43px;white-space:pre;font:bold 6.3px/6.3px 'Liberation Mono', monospace;color:#000;transform:scaleX(0.7804);transform-origin:0 0;">-3.626  V </div>
<div style="position:absolute;left:701.10px;top:305.43px;white-space:pre;font:bold 6.3px/6.3px 'Liberation Mono', monospace;color:#000;transform:scaleX(0.7804);transform-origin:0 0;">61.423 fA</div>
<div style="position:absolute;left:746.00px;top:305.43px;white-space:pre;font:bold 6.3px/6.3px 'Liberation Mono', monospace;color:#000;transform:scaleX(0.7804);transform-origin:0 0;">0.72</div>
<div style="position:absolute;left:791.00px;top:305.43px;white-space:pre;font:bold 6.3px/6.3px 'Liberation Mono', monospace;color:#000;transform:scaleX(0.7804);transform-origin:0 0;">2</div>
<div style="position:absolute;left:656.60px;top:311.90px;white-space:pre;font:bold 6.3px/6.3px 'Liberation Mono', monospace;color:#000;transform:scaleX(0.7804);transform-origin:0 0;">-3.628  V </div>
<div style="position:absolute;left:701.10px;top:311.90px;white-space:pre;font:bold 6.3px/6.3px 'Liberation Mono', monospace;color:#000;transform:scaleX(0.7804);transform-origin:0 0;">82.536 nA</div>
<div style="position:absolute;left:746.00px;top:311.90px;white-space:pre;font:bold 6.3px/6.3px 'Liberation Mono', monospace;color:#000;transform:scaleX(0.7804);transform-origin:0 0;">0.74</div>
<div style="position:absolute;left:791.00px;top:311.90px;white-space:pre;font:bold 6.3px/6.3px 'Liberation Mono', monospace;color:#000;transform:scaleX(0.7804);transform-origin:0 0;">2</div>
<div style="position:absolute;left:656.60px;top:318.37px;white-space:pre;font:bold 6.3px/6.3px 'Liberation Mono', monospace;color:#000;transform:scaleX(0.7804);transform-origin:0 0;">-3.629  V </div>
<div style="position:absolute;left:701.10px;top:318.37px;white-space:pre;font:bold 6.3px/6.3px 'Liberation Mono', monospace;color:#000;transform:scaleX(0.7804);transform-origin:0 0;">122.765 fA</div>
<div style="position:absolute;left:746.00px;top:318.37px;white-space:pre;font:bold 6.3px/6.3px 'Liberation Mono', monospace;color:#000;transform:scaleX(0.7804);transform-origin:0 0;">0.76</div>
<div style="position:absolute;left:791.00px;top:318.37px;white-space:pre;font:bold 6.3px/6.3px 'Liberation Mono', monospace;color:#000;transform:scaleX(0.7804);transform-origin:0 0;">2</div>
<div style="position:absolute;left:656.60px;top:324.85px;white-space:pre;font:bold 6.3px/6.3px 'Liberation Mono', monospace;color:#000;transform:scaleX(0.7804);transform-origin:0 0;">-3.628  V </div>
<div style="position:absolute;left:701.10px;top:324.85px;white-space:pre;font:bold 6.3px/6.3px 'Liberation Mono', monospace;color:#000;transform:scaleX(0.7804);transform-origin:0 0;">61.423 fA</div>
<div style="position:absolute;left:746.00px;top:324.85px;white-space:pre;font:bold 6.3px/6.3px 'Liberation Mono', monospace;color:#000;transform:scaleX(0.7804);transform-origin:0 0;">0.78</div>
<div style="position:absolute;left:791.00px;top:324.85px;white-space:pre;font:bold 6.3px/6.3px 'Liberation Mono', monospace;color:#000;transform:scaleX(0.7804);transform-origin:0 0;">2</div>
<div style="position:absolute;left:656.60px;top:331.32px;white-space:pre;font:bold 6.3px/6.3px 'Liberation Mono', monospace;color:#000;transform:scaleX(0.7804);transform-origin:0 0;">-3.63  V  </div>
<div style="position:absolute;left:701.10px;top:331.32px;white-space:pre;font:bold 6.3px/6.3px 'Liberation Mono', monospace;color:#000;transform:scaleX(0.7804);transform-origin:0 0;">61.423 fA</div>
<div style="position:absolute;left:746.00px;top:331.32px;white-space:pre;font:bold 6.3px/6.3px 'Liberation Mono', monospace;color:#000;transform:scaleX(0.7804);transform-origin:0 0;">0.8</div>
<div style="position:absolute;left:791.00px;top:331.32px;white-space:pre;font:bold 6.3px/6.3px 'Liberation Mono', monospace;color:#000;transform:scaleX(0.7804);transform-origin:0 0;">2</div>
<div style="position:absolute;left:656.60px;top:337.80px;white-space:pre;font:bold 6.3px/6.3px 'Liberation Mono', monospace;color:#000;transform:scaleX(0.7804);transform-origin:0 0;">-3.631  V </div>
<div style="position:absolute;left:701.10px;top:337.80px;white-space:pre;font:bold 6.3px/6.3px 'Liberation Mono', monospace;color:#000;transform:scaleX(0.7804);transform-origin:0 0;">61.423 fA</div>
<div style="position:absolute;left:746.00px;top:337.80px;white-space:pre;font:bold 6.3px/6.3px 'Liberation Mono', monospace;color:#000;transform:scaleX(0.7804);transform-origin:0 0;">0.82</div>
<div style="position:absolute;left:791.00px;top:337.80px;white-space:pre;font:bold 6.3px/6.3px 'Liberation Mono', monospace;color:#000;transform:scaleX(0.7804);transform-origin:0 0;">2</div>
<div style="position:absolute;left:656.60px;top:344.27px;white-space:pre;font:bold 6.3px/6.3px 'Liberation Mono', monospace;color:#000;transform:scaleX(0.7804);transform-origin:0 0;">-3.632  V </div>
<div style="position:absolute;left:701.10px;top:344.27px;white-space:pre;font:bold 6.3px/6.3px 'Liberation Mono', monospace;color:#000;transform:scaleX(0.7804);transform-origin:0 0;">82.536 nA</div>
<div style="position:absolute;left:746.00px;top:344.27px;white-space:pre;font:bold 6.3px/6.3px 'Liberation Mono', monospace;color:#000;transform:scaleX(0.7804);transform-origin:0 0;">0.84</div>
<div style="position:absolute;left:791.00px;top:344.27px;white-space:pre;font:bold 6.3px/6.3px 'Liberation Mono', monospace;color:#000;transform:scaleX(0.7804);transform-origin:0 0;">2</div>
<div style="position:absolute;left:656.60px;top:350.75px;white-space:pre;font:bold 6.3px/6.3px 'Liberation Mono', monospace;color:#000;transform:scaleX(0.7804);transform-origin:0 0;">-3.629  V </div>
<div style="position:absolute;left:701.10px;top:350.75px;white-space:pre;font:bold 6.3px/6.3px 'Liberation Mono', monospace;color:#000;transform:scaleX(0.7804);transform-origin:0 0;">82.536 nA</div>
<div style="position:absolute;left:746.00px;top:350.75px;white-space:pre;font:bold 6.3px/6.3px 'Liberation Mono', monospace;color:#000;transform:scaleX(0.7804);transform-origin:0 0;">0.86</div>
<div style="position:absolute;left:791.00px;top:350.75px;white-space:pre;font:bold 6.3px/6.3px 'Liberation Mono', monospace;color:#000;transform:scaleX(0.7804);transform-origin:0 0;">2</div>
<div style="position:absolute;left:656.60px;top:357.22px;white-space:pre;font:bold 6.3px/6.3px 'Liberation Mono', monospace;color:#000;transform:scaleX(0.7804);transform-origin:0 0;">-3.631  V </div>
<div style="position:absolute;left:701.10px;top:357.22px;white-space:pre;font:bold 6.3px/6.3px 'Liberation Mono', monospace;color:#000;transform:scaleX(0.7804);transform-origin:0 0;">82.536 nA</div>
<div style="position:absolute;left:746.00px;top:357.22px;white-space:pre;font:bold 6.3px/6.3px 'Liberation Mono', monospace;color:#000;transform:scaleX(0.7804);transform-origin:0 0;">0.88</div>
<div style="position:absolute;left:791.00px;top:357.22px;white-space:pre;font:bold 6.3px/6.3px 'Liberation Mono', monospace;color:#000;transform:scaleX(0.7804);transform-origin:0 0;">2</div>
<div style="position:absolute;left:656.60px;top:363.70px;white-space:pre;font:bold 6.3px/6.3px 'Liberation Mono', monospace;color:#000;transform:scaleX(0.7804);transform-origin:0 0;">-3.633  V </div>
<div style="position:absolute;left:701.10px;top:363.70px;white-space:pre;font:bold 6.3px/6.3px 'Liberation Mono', monospace;color:#000;transform:scaleX(0.7804);transform-origin:0 0;">82.536 nA</div>
<div style="position:absolute;left:746.00px;top:363.70px;white-space:pre;font:bold 6.3px/6.3px 'Liberation Mono', monospace;color:#000;transform:scaleX(0.7804);transform-origin:0 0;">0.9</div>
<div style="position:absolute;left:791.00px;top:363.70px;white-space:pre;font:bold 6.3px/6.3px 'Liberation Mono', monospace;color:#000;transform:scaleX(0.7804);transform-origin:0 0;">2</div>
<div style="position:absolute;left:656.60px;top:370.18px;white-space:pre;font:bold 6.3px/6.3px 'Liberation Mono', monospace;color:#000;transform:scaleX(0.7804);transform-origin:0 0;">-3.633  V </div>
<div style="position:absolute;left:701.10px;top:370.18px;white-space:pre;font:bold 6.3px/6.3px 'Liberation Mono', monospace;color:#000;transform:scaleX(0.7804);transform-origin:0 0;">82.536 nA</div>
<div style="position:absolute;left:746.00px;top:370.18px;white-space:pre;font:bold 6.3px/6.3px 'Liberation Mono', monospace;color:#000;transform:scaleX(0.7804);transform-origin:0 0;">0.92</div>
<div style="position:absolute;left:791.00px;top:370.18px;white-space:pre;font:bold 6.3px/6.3px 'Liberation Mono', monospace;color:#000;transform:scaleX(0.7804);transform-origin:0 0;">2</div>
<div style="position:absolute;left:653.50px;top:402.80px;width:142.10px;height:8.00px;background:linear-gradient(#fefefb,#f0efe8)"></div>
<div style="position:absolute;left:655.00px;top:403.00px;width:6.70px;height:7.30px;background:linear-gradient(#e4ecfc,#c6d6f6);border-radius:1px"></div>
<svg style="position:absolute;left:655.00px;top:403.00px;" width="6.7" height="7.3" viewBox="0 0 6.7 7.3"><path d="M4.2 2 L2.5 3.65 L4.2 5.3" stroke="#4d6185" stroke-width="0.8" fill="none"/></svg>
<div style="position:absolute;left:662.00px;top:403.00px;width:41.00px;height:7.30px;background:linear-gradient(#d4e2fc,#bcd0f6);border:0.5px solid #b0c4ec;border-radius:1px"></div>
<svg style="position:absolute;left:679.00px;top:404.80px;" width="6" height="4" viewBox="0 0 6 4"><path d="M1 0.5 L1 3.5 M2.5 0.5 L2.5 3.5 M4 0.5 L4 3.5" stroke="#8ca6dc" stroke-width="0.6"/></svg>
<div style="position:absolute;left:787.50px;top:403.00px;width:7.00px;height:7.30px;background:linear-gradient(#e4ecfc,#c6d6f6);border-radius:1px"></div>
<svg style="position:absolute;left:787.50px;top:403.00px;" width="7" height="7.3" viewBox="0 0 7 7.3"><path d="M2.6 2 L4.3 3.65 L2.6 5.3" stroke="#4d6185" stroke-width="0.8" fill="none"/></svg>
<div style="position:absolute;left:795.00px;top:52.00px;width:0.70px;height:358.90px;background:#4a4a58"></div>
<div style="position:absolute;left:653.50px;top:410.20px;width:142.20px;height:0.70px;background:#4a4a58"></div>
<div style="position:absolute;left:314.80px;top:201.60px;width:173.40px;height:60.00px;background:#0831d9;border-radius:5px 5px 0 0"></div>
<div style="position:absolute;left:314.80px;top:201.60px;width:173.40px;height:13.70px;background:linear-gradient(#3a8cf8 0%,#1a62f0 12%,#0554e4 40%,#0450e0 75%,#0a48d0 100%);border-radius:5px 5px 0 0"></div>
<div style="position:absolute;left:318.70px;top:207.60px;white-space:pre;font:bold 6.6px/6.6px 'Liberation Mono', monospace;color:#ffffff;">Warning from VersaSTAT 4, SN: 14328090</div>
<div style="position:absolute;left:475.80px;top:204.40px;width:9.70px;height:9.80px;background:linear-gradient(135deg,#f09070,#d8461e);border:0.7px solid #fff;border-radius:1.4px"></div>
<svg style="position:absolute;left:475.80px;top:204.40px;" width="9.7" height="9.8" viewBox="0 0 9.7 9.8"><path d="M2.7 2.7 L7 7.1 M7 2.7 L2.7 7.1" stroke="#fff" stroke-width="1.2"/></svg>
<div style="position:absolute;left:317.00px;top:215.30px;width:169.00px;height:44.40px;background:#ece9d8"></div>
<svg style="position:absolute;left:321.50px;top:221.30px;" width="16" height="16" viewBox="0 0 16 16"><path d="M8 0.8 L15.3 14.6 L0.7 14.6Z" fill="#f8d820" stroke="#a08000" stroke-width="0.7" stroke-linejoin="round"/><path d="M8 4.6 L8 10" stroke="#000" stroke-width="1.8"/><circle cx="8" cy="12.4" r="1" fill="#000"/></svg>
<svg style="position:absolute;left:347.00px;top:225.40px;" width="90" height="7" viewBox="0 0 90 7"><path transform="translate(0.00 0.4) scale(0.5800)" d="M5 0 L5 1.5 M1 3 L1 1.8 L9 1.8 L9 3 M3 3.5 L4 4.5 M2.5 5 L3.5 6 M1 6.8 L9 6.8 M6 2.8 L5.5 7 Q4 9 1 10 M5.5 7.5 L9 10" stroke="#282828" stroke-width="0.948" fill="none" stroke-linecap="square"/><path transform="translate(5.95 0.4) scale(0.5800)" d="M0.5 1 L3.5 1 L3 5 M1 1 L0.8 5 L4 5 L3.5 9 L2.5 9.5 M0.5 7.5 L2.5 7 M7 0.5 L4.5 3.5 M7 0.5 L9.8 3.5 M5.5 4 L8.5 4 M5.5 5.5 L6 8 M7 5.5 L7.2 8 M9 5.5 L8.2 8 M4.5 9.5 L9.8 9.5" stroke="#282828" stroke-width="0.948" fill="none" stroke-linecap="square"/><path transform="translate(11.90 0.4) scale(0.5800)" d="M1 0.8 L9 0.8 L9 9.8 L1 9.8 Z M2.5 4 L7.5 4 M5 2 L5 5 L3 8 M5.3 5.5 L7.5 8" stroke="#282828" stroke-width="0.948" fill="none" stroke-linecap="square"/><path transform="translate(17.85 0.4) scale(0.5800)" d="M4 2.5 L9.8 2.5 M8 0.5 L8 8 L7 7.5 M5.5 4.5 L6.5 5.8 M1 1 L2 2 M0.5 4 L2 4 L2 8 L0.5 9.5 M1.5 8.5 Q4 9.8 9.8 9.6" stroke="#282828" stroke-width="0.948" fill="none" stroke-linecap="square"/><path transform="translate(23.80 0.4) scale(0.5800)" d="M1 2 L6 2 M0.5 4 L9 4 M3 0.5 L3 4 M1.5 5.5 L5 5.5 M3 4 L2 8 L5 7.5 M0.5 9 L5.5 9 M3.3 6 L3.3 10 M6.5 0.5 L7 5 L9.5 9.5 M9.5 6 L6 9.5 M8 0.5 L9 1.5" stroke="#282828" stroke-width="0.948" fill="none" stroke-linecap="square"/><path transform="translate(29.75 0.4) scale(0.5800)" d="M5 0.5 L4 2 M4 2 L4 8.5 M4 2 L8 2 L8 5 L4 5 M4 5 L8.5 5 L8.5 8.5 L4 8.5 M1 1 L2 2 M0.5 4 L2 4 L2 8 L0.5 9.5 M1.5 8.5 Q4 9.8 9.8 9.6" stroke="#282828" stroke-width="0.948" fill="none" stroke-linecap="square"/><path transform="translate(35.70 0.4) scale(0.5800)" d="M0.5 3 L9.5 3 M2 5 L5 5 L5 7.5 L2 7.5 Z M1 9.5 L5.5 8.5 M6.5 0.5 Q7 7 9.8 9.8 M9.5 6 L7 9 M8 0.5 L9 1.3" stroke="#282828" stroke-width="0.948" fill="none" stroke-linecap="square"/><text x="46.25" y="5.34" font-family="Liberation Mono" font-size="5" fill="#282828">c</text><text x="49.15" y="5.34" font-family="Liberation Mono" font-size="5" fill="#282828">e</text><text x="52.05" y="5.34" font-family="Liberation Mono" font-size="5" fill="#282828">l</text><text x="54.95" y="5.34" font-family="Liberation Mono" font-size="5" fill="#282828">l</text><path transform="translate(57.85 0.4) scale(0.5800)" d="M2.5 0.5 L0.5 4.5 M1.8 3 L1.8 10 M6.5 0 L6.5 1 M3.5 1.3 L9.8 1.3 M4.5 2.5 L8.5 2.5 L8.5 4 L4.5 4 Z M3.5 6 L3.5 5 L9.8 5 L9.8 6 M4.5 7 L9 7 M6.8 7 L6.8 9.8 L6 9.5" stroke="#282828" stroke-width="0.948" fill="none" stroke-linecap="square"/><path transform="translate(63.80 0.4) scale(0.5800)" d="M5 0.5 L5 9.5 M5 4.5 L8.5 4.5 M2 3.5 L2 9.5 M0.5 9.5 L9.8 9.5" stroke="#282828" stroke-width="0.948" fill="none" stroke-linecap="square"/><path transform="translate(69.75 0.4) scale(0.5800)" d="M0.5 1 L9.5 1 M5 1 L4 3 M1.5 10 L1.5 3.5 L8.5 3.5 L8.5 10 L7.5 9.5 M4 3.5 L4 8.5 M6 3.5 L6 8.5" stroke="#282828" stroke-width="0.948" fill="none" stroke-linecap="square"/><path transform="translate(75.70 0.4) scale(0.5800)" d="M2.5 0.5 L0.5 3.5 L2.5 3.5 L0.5 6.5 L3.5 6 M0.5 9 L3.5 8 M4.5 2.2 L9.8 2.2 M7 0.5 L7 4.5 M5 4.5 L9.5 4.5 M5 6 L9 6 L9 9.5 L5 9.5 Z" stroke="#282828" stroke-width="0.948" fill="none" stroke-linecap="square"/><path transform="translate(81.65 0.4) scale(0.5800)" d="M0.5 2 L9.5 2 M5 0 L5 10 M2 3.5 L8 3.5 L8 6 L2 6 Z M4.5 6.5 L0.5 9.5 M5.5 6.5 L9.8 9.5" stroke="#282828" stroke-width="0.948" fill="none" stroke-linecap="square"/></svg>
<div style="position:absolute;left:383.10px;top:245.10px;width:36.40px;height:9.00px;background:linear-gradient(#fefefe,#f0f0ea 70%,#e0ded4);border:0.8px solid #355fa8;border-radius:1.5px;box-shadow:inset 0 0 0 0.8px #a8c4f0"></div>
<svg style="position:absolute;left:395.30px;top:246.30px;" width="16" height="8" viewBox="0 0 16 8"><path transform="translate(0.00 0.4) scale(0.6000)" d="M0.5 1 L4 1 M2 1 L0.5 5.5 M1.5 4 L4 4 L4 8.5 L1.5 8.5 Z M6.5 0.5 L5.5 2 M6 1.3 L8.5 1.3 L7.5 2.5 M5.5 3 L5.5 7 L4.8 9.5 M5.5 3 L9.5 3 L9.5 9.8 L8.8 9.5 M5.5 5 L9.5 5 M5.5 7 L9.5 7 M7.5 3 L7.5 9" stroke="#202020" stroke-width="1.000" fill="none" stroke-linecap="square"/><path transform="translate(6.60 0.4) scale(0.6000)" d="M5 0 L5 1.2 M1 2.8 L1 1.5 L9 1.5 L9 2.8 M2.5 4 L7.5 4 M5 4 L5 8.5 L8 8.5 M5 5.8 L7.5 5.8 M3 5.5 L2.2 8.5 Q4.5 9.8 9.8 9.8" stroke="#202020" stroke-width="1.000" fill="none" stroke-linecap="square"/></svg>
<div style="position:absolute;left:0.00px;top:419.30px;width:800.00px;height:1.30px;background:#c8c5b4"></div>
<div style="position:absolute;left:0.00px;top:420.50px;width:800.00px;height:13.10px;background:#ece9d8"></div>
<div style="position:absolute;left:1.25px;top:426.00px;white-space:pre;font:normal 6.4px/6.4px 'Liberation Sans', sans-serif;color:#101010;transform:scaleX(0.8542);transform-origin:0 0;">VersaSTAT 4, SN: 14328090</div>
<div style="position:absolute;left:111.50px;top:421.50px;width:46.70px;height:11.50px;background:#ff0000"></div>
<div style="position:absolute;left:126.25px;top:426.00px;white-space:pre;font:normal 6.4px/6.4px 'Liberation Sans', sans-serif;color:#fff;transform:scaleX(0.8855);transform-origin:0 0;">CellON</div>
<div style="position:absolute;left:162.50px;top:421.50px;width:0.80px;height:11.50px;background:#d6d2c0"></div>
<div style="position:absolute;left:213.00px;top:421.50px;width:0.80px;height:11.50px;background:#d6d2c0"></div>
<div style="position:absolute;left:265.50px;top:421.50px;width:0.80px;height:11.50px;background:#d6d2c0"></div>
<div style="position:absolute;left:290.50px;top:421.50px;width:0.80px;height:11.50px;background:#d6d2c0"></div>
<div style="position:absolute;left:317.50px;top:421.50px;width:0.80px;height:11.50px;background:#d6d2c0"></div>
<div style="position:absolute;left:417.50px;top:421.50px;width:0.80px;height:11.50px;background:#d6d2c0"></div>
<div style="position:absolute;left:497.50px;top:421.50px;width:0.80px;height:11.50px;background:#d6d2c0"></div>
<div style="position:absolute;left:166.25px;top:426.00px;white-space:pre;font:normal 6.4px/6.4px 'Liberation Sans', sans-serif;color:#101010;transform:scaleX(0.9486);transform-origin:0 0;">E = --</div>
<div style="position:absolute;left:218.75px;top:426.00px;white-space:pre;font:normal 6.4px/6.4px 'Liberation Sans', sans-serif;color:#101010;transform:scaleX(0.9379);transform-origin:0 0;">I = --</div>
<div style="position:absolute;left:276.00px;top:426.00px;white-space:pre;font:normal 6.4px/6.4px 'Liberation Sans', sans-serif;color:#101010;transform:scaleX(1.2308);transform-origin:0 0;">--</div>
<div style="position:absolute;left:295.75px;top:426.00px;white-space:pre;font:normal 6.4px/6.4px 'Liberation Sans', sans-serif;color:#101010;transform:scaleX(0.8208);transform-origin:0 0;">External</div>
<div style="position:absolute;left:420.75px;top:426.00px;white-space:pre;font:normal 6.4px/6.4px 'Liberation Sans', sans-serif;color:#101010;transform:scaleX(0.8321);transform-origin:0 0;">Logged In: Security Disabled</div>
<div style="position:absolute;left:797.00px;top:427.00px;width:1.00px;height:1.00px;background:#b0ad9c"></div>
<div style="position:absolute;left:795.00px;top:429.00px;width:1.00px;height:1.00px;background:#b0ad9c"></div>
<div style="position:absolute;left:797.00px;top:429.00px;width:1.00px;height:1.00px;background:#b0ad9c"></div>
<div style="position:absolute;left:793.00px;top:431.00px;width:1.00px;height:1.00px;background:#b0ad9c"></div>
<div style="position:absolute;left:795.00px;top:431.00px;width:1.00px;height:1.00px;background:#b0ad9c"></div>
<div style="position:absolute;left:797.00px;top:431.00px;width:1.00px;height:1.00px;background:#b0ad9c"></div>
<div style="position:absolute;left:0.00px;top:433.60px;width:800.00px;height:15.40px;background:linear-gradient(#2c68dc 0%,#3a84e6 9%,#3680e4 13%,#2258d4 24%,#2056d4 60%,#2460da 90%,#1c48b8 100%)"></div>
<div style="position:absolute;left:0.00px;top:432.60px;width:800.00px;height:1.00px;background:#ddd9c6"></div>
<div style="position:absolute;left:0.00px;top:433.80px;width:48.00px;height:15.20px;background:linear-gradient(#5cb65a 0%,#3d9a3d 25%,#3a963a 70%,#2e7e2e 100%);border-radius:0 6px 6px 0"></div>
<svg style="position:absolute;left:5.00px;top:436.50px;" width="10" height="9.5" viewBox="0 0 10 9.5"><path d="M0.5 1.5 Q2.5 0.5 4.5 1.2 L4 4.3 Q2 3.6 0 4.5Z" fill="#f03a1a"/><path d="M5 1.4 Q7 2.2 9.5 1 L9 4.2 Q7 5 4.5 4.5Z" fill="#38b838"/><path d="M0 5 Q2 4.2 4 4.8 L3.5 8 Q1.5 7.4 -0.3 8.2Z" fill="#2870f0"/><path d="M4.5 5 Q6.8 5.6 9 4.7 L8.6 8 Q6.5 8.7 4 8.2Z" fill="#f8c800"/></svg>
<svg style="position:absolute;left:55.00px;top:437.30px;" width="7" height="7" viewBox="0 0 7 7"><circle cx="3.5" cy="3.5" r="3.3" fill="#f09020"/><circle cx="3.5" cy="3.5" r="2.2" fill="#fff5e0"/><path d="M2.6 1.9 L5 3.5 L2.6 5.1Z" fill="#e87010"/></svg>
<svg style="position:absolute;left:66.00px;top:437.00px;" width="7" height="7.5" viewBox="0 0 7 7.5"><rect x="0.5" y="0.5" width="6" height="6.5" rx="1.5" fill="#dce8fa" stroke="#6a90d0" stroke-width="0.6"/><path d="M2 2.5 L5 2.5 M2 4 L5 4" stroke="#3060c0" stroke-width="0.8"/></svg>
<div style="position:absolute;left:79.50px;top:435.00px;width:78.00px;height:13.00px;background:linear-gradient(#1a48b0,#1e50c0 50%,#1c4bb8);border-radius:2px;box-shadow:inset 0.5px 0.5px 0.5px #0c2a70"></div>
<div style="position:absolute;left:84.00px;top:437.00px;width:8.00px;height:8.50px;background:#0c1ca8;border-radius:1px"></div>
<svg style="position:absolute;left:84.00px;top:437.00px;" width="8" height="8.5" viewBox="0 0 8 8.5"><path d="M1.2 1.6 L3 7.4 L4.7 6.6 L3.4 1.6 Z" fill="#fff"/><circle cx="5.7" cy="3.3" r="1.8" fill="#fff"/></svg>
<div style="position:absolute;left:94.00px;top:438.30px;white-space:pre;font:bold 6.2px/6.2px 'Liberation Mono', monospace;color:#f4f8ff;transform:scaleX(0.8065);transform-origin:0 0;opacity:0.9">VersaStudio - ceshi</div>
<div style="position:absolute;left:159.50px;top:435.00px;width:78.00px;height:13.00px;background:linear-gradient(#4a90f8,#3c80f0 50%,#3478e8);border-radius:2px"></div>
<svg style="position:absolute;left:164.00px;top:437.20px;" width="7" height="7.5" viewBox="0 0 7 7.5"><rect x="0.5" y="0.5" width="6" height="6.5" fill="#f0f0f8" stroke="#8090b0" stroke-width="0.6"/><path d="M1.8 2.5 L5 2.5 M1.8 4 L5 4 M1.8 5.4 L4 5.4" stroke="#4060a0" stroke-width="0.6"/></svg>
<div style="position:absolute;left:189.50px;top:438.30px;white-space:pre;font:normal 6.2px/6.2px 'Liberation Mono', monospace;color:#fff;transform:scaleX(0.8065);transform-origin:0 0;">Microsoft O...</div>
<div style="position:absolute;left:716.80px;top:433.80px;width:83.20px;height:15.20px;background:linear-gradient(#20a8f8,#0e96ef 15%,#0c8ee8 70%,#0b80d8);border-left:0.7px solid #1e58b8"></div>
<svg style="position:absolute;left:703.50px;top:438.80px;" width="7" height="5.5" viewBox="0 0 7 5.5"><rect x="0.3" y="0.5" width="6.4" height="4.6" fill="#e0e0e0" stroke="#404040" stroke-width="0.5"/><rect x="1" y="2" width="5" height="0.7" fill="#606060"/><rect x="1" y="3.3" width="5" height="0.7" fill="#606060"/></svg>
<svg style="position:absolute;left:712.70px;top:436.80px;" width="8.5" height="9" viewBox="0 0 8.5 9"><circle cx="4.25" cy="4.5" r="4" fill="#60a8f0" stroke="#e8f4ff" stroke-width="0.6"/><path d="M5 2.5 L3 4.5 L5 6.5" stroke="#fff" stroke-width="1" fill="none"/></svg>
<svg style="position:absolute;left:722.00px;top:437.50px;" width="8" height="7.5" viewBox="0 0 8 7.5"><rect x="0" y="0.5" width="8" height="6" fill="#202830"/><rect x="1" y="1.5" width="3" height="3" fill="#8098c0"/><rect x="4.5" y="2.5" width="3" height="3" fill="#c0d0e0"/></svg>
<svg style="position:absolute;left:733.00px;top:437.50px;" width="8" height="8" viewBox="0 0 8 8"><rect x="0.5" y="2" width="3.5" height="4" fill="#c8c8d0"/><circle cx="5.5" cy="5" r="2.5" fill="#e02020"/><path d="M4.5 5 L5.3 5.8 L6.6 4.2" stroke="#fff" stroke-width="0.6" fill="none"/></svg>
<svg style="position:absolute;left:740.50px;top:437.20px;" width="8.5" height="8.5" viewBox="0 0 8.5 8.5"><circle cx="4.25" cy="4.25" r="4" fill="#f0a020"/><circle cx="4.25" cy="4.25" r="2.2" fill="none" stroke="#fff" stroke-width="0.8"/></svg>
<svg style="position:absolute;left:750.00px;top:437.20px;" width="8" height="8.5" viewBox="0 0 8 8.5"><rect x="0.5" y="1" width="5" height="5" fill="#5060a0"/><rect x="2" y="2.5" width="2" height="2" fill="#c0c8e0"/><path d="M4.5 4.5 L7.8 8 M7.8 4.5 L4.5 8" stroke="#e02020" stroke-width="0.9"/></svg>
<svg style="position:absolute;left:760.50px;top:437.00px;" width="7" height="8.5" viewBox="0 0 7 8.5"><path d="M3.5 0.5 L6.5 1.5 L6.3 5 Q5.5 7.2 3.5 8 Q1.5 7.2 0.7 5 L0.5 1.5Z" fill="#e8f0f8" stroke="#5070a0" stroke-width="0.5"/><path d="M2 4 L3.2 5.2 L5.2 2.8" stroke="#2070d0" stroke-width="0.8" fill="none"/></svg>
<svg style="position:absolute;left:769.50px;top:437.30px;" width="6" height="8" viewBox="0 0 6 8"><path d="M3 0.3 L5.8 1.2 L5.6 4.8 Q5 6.8 3 7.7 Q1 6.8 0.4 4.8 L0.2 1.2Z" fill="#d02020"/><path d="M1.8 3 L4.2 5.4 M4.2 3 L1.8 5.4" stroke="#fff" stroke-width="0.6"/></svg>
<div style="position:absolute;left:780.00px;top:439.00px;white-space:pre;font:normal 6.6px/6.6px 'Liberation Sans', sans-serif;color:#fff;transform:scaleX(0.9187);transform-origin:0 0;">9:44</div>
<svg style="position:absolute;left:19.50px;top:436.40px;" width="24" height="11" viewBox="0 0 24 11"><g transform="skewX(-10)"><path transform="translate(0.00 0.4) scale(0.9000)" d="M1 1 L9 1 M0.5 5 L9.5 5 M3.5 1 L3.5 6 Q3 8.5 1 10 M6.5 1 L6.5 10" stroke="#ffffff" stroke-width="0.833" fill="none" stroke-linecap="square"/><path transform="translate(10.50 0.4) scale(0.9000)" d="M2.5 0.5 L1 5.5 L4 7 M0.5 3.5 L4 3.5 M3.2 3.5 Q2.8 7 0.5 9.5 M6.5 0.5 L5.5 3.5 L9.5 3.2 M8.5 2 L9.8 3.8 M5.5 5.5 L9.5 5.5 L9.5 9.5 L5.5 9.5 Z" stroke="#ffffff" stroke-width="0.833" fill="none" stroke-linecap="square"/></g></svg>
<svg style="position:absolute;left:172.80px;top:437.60px;" width="15" height="8" viewBox="0 0 15 8"><path transform="translate(0.00 0.4) scale(0.6000)" d="M2.5 0 L2.5 1 M0.5 1.5 L5 1.5 M1.5 2.5 L2 3.5 M3.5 2.5 L3 3.5 M0.5 4 L5 4 M0.5 6 L5 6 M2.7 4 L2.7 10 M2.5 6.5 L0.5 9 M3 6.5 L4.5 8 M9 0.5 L6 1.5 L6 6 L5 10 M6 4 L9.8 4 M8.3 4 L8.3 10" stroke="#ffffff" stroke-width="1.000" fill="none" stroke-linecap="square"/><path transform="translate(6.20 0.4) scale(0.6000)" d="M4 1.5 L9 1.5 L9 3.5 L4 3.5 M3.5 5 L9.8 5 M4 6.5 L9 6.5 M6.5 0 L6.5 8.5 M0.5 1 L2.5 1 L1 4 L2.5 4 L1.5 7.5 L0.5 9 M1.5 7 Q4 9.8 9.8 9.6" stroke="#ffffff" stroke-width="1.000" fill="none" stroke-linecap="square"/></svg>
</body></html>
